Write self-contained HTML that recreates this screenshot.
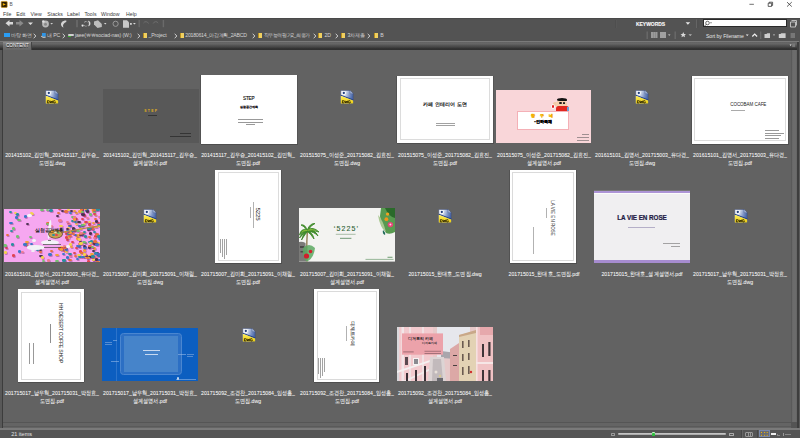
<!DOCTYPE html>
<html><head><meta charset="utf-8">
<style>
*{margin:0;padding:0;box-sizing:border-box}
html,body{width:800px;height:438px;overflow:hidden;background:#626262;font-family:"Liberation Sans",sans-serif}
.a{position:absolute}
#title{left:0;top:0;width:800px;height:18px;background:#fff}
.mn{position:absolute;top:10.7px;font-size:5.2px;color:#3a3a3a;line-height:6px}
#tb{left:0;top:18px;width:800px;height:23px;background:#535353}
.sep{position:absolute;width:1.5px;height:8px;background:#474747;border-right:0.5px solid #626262}
.bc{position:absolute;top:32.3px;font-size:5.2px;color:#d4d4d4;line-height:6px;white-space:nowrap;letter-spacing:-0.12px}
.chev{position:absolute;top:32.5px;font-size:5px;color:#bdbdbd;line-height:6px}
.fold{position:absolute;top:32.5px;width:3.6px;height:5.5px;background:#f0d060;border-left:0.8px solid #b89020}
#content{left:3px;top:50px;width:787.5px;height:372px;background:#626262}
.th{position:absolute;overflow:hidden}
.tt{position:absolute;font-family:"Liberation Sans",sans-serif;white-space:nowrap;line-height:1}
.dwg{position:absolute;width:14px;height:14px}
.lb{position:absolute;width:130px;text-align:center;font-size:6.1px;line-height:8px;color:#f6f6f6;white-space:nowrap;transform:scaleX(0.85);-webkit-text-stroke:0.1px rgba(255,255,255,.6)}
</style></head><body>
<!-- title bar -->
<div class="a" id="title"></div>
<svg class="a" style="left:0;top:0" width="9" height="9" viewBox="0 0 9 9">
 <rect x="1.2" y="1.4" width="6" height="6" rx="0.6" fill="#2c1c00" stroke="#d89a00" stroke-width="0.6"/>
 <path d="M2.8 3 L5.9 4.4 L2.8 5.8 Z" fill="#f0b000"/>
</svg>
<div class="a" style="left:9.6px;top:2.2px;font-size:4.8px;color:#555;line-height:5px">B</div>
<svg class="a" style="left:745px;top:0" width="55" height="9" viewBox="0 0 55 9">
 <path d="M4.4 4.3 H8.9" stroke="#333" stroke-width="0.7"/>
 <path d="M23.2 3.2 H26.6 V6.4 H23.2 Z M24.2 3.2 V2.2 H27.6 V5.4 H26.6" fill="none" stroke="#222" stroke-width="0.7"/>
 <path d="M42 2.1 L46.8 6.6 M46.8 2.1 L42 6.6" stroke="#222" stroke-width="0.7"/>
</svg>
<div class="mn" style="left:3px">File</div>
<div class="mn" style="left:16.3px">Edit</div>
<div class="mn" style="left:30.6px">View</div>
<div class="mn" style="left:47.3px">Stacks</div>
<div class="mn" style="left:66.9px">Label</div>
<div class="mn" style="left:84.4px">Tools</div>
<div class="mn" style="left:101px">Window</div>
<div class="mn" style="left:126px">Help</div>

<!-- toolbar -->
<div class="a" id="tb"></div>
<div class="a" style="left:0;top:18px;width:800px;height:1px;background:#4a4a4a"></div>
<svg class="a" style="left:0;top:18px" width="800" height="12" viewBox="0 0 800 12">
 <path d="M5.5 5.2 L9.5 2 V4 H13 V6.6 H9.5 V8.6 Z" fill="#d8d8d8"/>
 <path d="M23.5 5.2 L19.5 2 V4 H16 V6.6 H19.5 V8.6 Z" fill="#8a8a8a"/>
 <path d="M28 4.5 H33 L30.5 7 Z" fill="#e0e0e0"/>
 <circle cx="45.5" cy="6" r="3.4" fill="#b8b8b8"/><circle cx="45.5" cy="6.3" r="1.5" fill="#888"/><circle cx="43.3" cy="3.5" r="1.3" fill="#e0e0e0"/>
 <path d="M50.3 5 H53 L51.65 6.5 Z" fill="#d0d0d0"/>
 <path d="M66.3 2.6 C63 2.4 60.2 4.8 61.2 7.4 C61.7 8.6 62.8 9.3 63.6 9.4 C62.6 7.8 62.8 5.4 66.3 3.9 Z" fill="#d4d4d4"/>
 <rect x="76.2" y="2" width="1.6" height="7.2" fill="#6c6c6c"/>
 <circle cx="82.6" cy="7.6" r="1.3" fill="#e8e8e8" stroke="#2a2a2a" stroke-width="0.4"/><path d="M84 4.6 C85 3.2 87 3.2 87.6 4.4 M84.2 7.4 C85 8.4 86.4 8.4 87.2 7.6" fill="none" stroke="#bdbdbd" stroke-width="0.9" stroke-dasharray="0.9 0.5"/><path d="M88.4 3 C90.6 3.6 90.8 7 88.6 8 C89.4 6.4 89.4 4.6 88.4 3Z" fill="#e0e0e0" stroke="#e0e0e0" stroke-width="0.5"/>
 <path d="M94 3.5 L98 2.2 L101.8 6 V9 L97.5 10 L94 6.5 Z" fill="#bdbdbd"/>
 <path d="M104 5 H106.5 L105.25 6.4 Z" fill="#ddd"/>
 <circle cx="115.6" cy="5.8" r="2.6" fill="none" stroke="#9a9a9a" stroke-width="1"/>
 <path d="M123 2.2 H127 L129 4.2 V9.8 H123 Z" fill="#c8c8c8"/><rect x="130" y="5" width="1.8" height="1.8" fill="#cfcfcf"/>
 <path d="M133 5 H135.8 L134.4 6.5 Z" fill="#ddd"/>
 <rect x="138.5" y="2" width="1.4" height="7.2" fill="#6a6a6a"/>
 <path d="M148.5 5.5 A2.8 2.8 0 0 0 143.5 5" fill="none" stroke="#6e6e6e" stroke-width="1"/>
 <path d="M153.2 5.5 A2.8 2.8 0 0 1 158.2 5" fill="none" stroke="#6e6e6e" stroke-width="1"/>
 <rect x="162.7" y="2" width="1.4" height="7.2" fill="#6a6a6a"/>
 <rect x="615" y="2" width="1" height="8" fill="#4e4e4e"/><rect x="616" y="2" width="0.5" height="8" fill="#5c5c5c"/>
 <path d="M685.6 4.2 H690.2 L687.9 6.8 Z" fill="#e8e8e8"/>
 <rect x="696.2" y="1.5" width="1.2" height="8.5" fill="#6a6a6a"/><rect x="697.4" y="1.5" width="0.8" height="8.5" fill="#4a4a4a"/>
 <path d="M790.5 4 H795.5 V9 H790.5 Z M791.5 2.5 H796.5 V7.5" fill="none" stroke="#c8c8c8" stroke-width="0.9"/>
</svg>
<div class="a" style="left:636px;top:20.5px;font-size:5px;font-weight:bold;color:#f6f6f6;line-height:6px;letter-spacing:-0.05px;-webkit-text-stroke:0.12px #fff">KEYWORDS</div>
<div class="a" style="left:703px;top:19px;width:84px;height:8.3px;background:#fff;border:0.7px solid #2a2a2a"></div>
<svg class="a" style="left:703px;top:19px" width="12" height="9" viewBox="0 0 12 9">
 <circle cx="4.5" cy="4" r="1.8" fill="none" stroke="#333" stroke-width="0.7"/><path d="M3.2 5.3 L1.6 7" stroke="#333" stroke-width="0.8"/><path d="M7 3.4 H9 L8 4.6 Z" fill="#333"/>
</svg>

<!-- breadcrumb row -->
<div class="a" style="left:3.7px;top:33.3px;width:6.3px;height:3.5px;background:#2a9df4"></div>
<div class="bc" style="left:11px">바탕 화면</div>
<svg class="a" style="left:33.0px;top:32.5px" width="4" height="6" viewBox="0 0 4 6"><path d="M0.7 0.9 L2.9 3 L0.7 5.1" fill="none" stroke="#d8d8d8" stroke-width="1"/></svg>
<svg class="a" style="left:39.5px;top:32px" width="7" height="7" viewBox="0 0 7 7"><path d="M2 1 H5.8 V4.6 H2 Z" fill="#2f95e6"/><path d="M1.2 4.2 Q2.5 5.8 5.6 5.2" fill="none" stroke="#e8e8e8" stroke-width="0.9"/></svg>
<div class="bc" style="left:47px">내 PC</div>
<svg class="a" style="left:62.0px;top:32.5px" width="4" height="6" viewBox="0 0 4 6"><path d="M0.7 0.9 L2.9 3 L0.7 5.1" fill="none" stroke="#d8d8d8" stroke-width="1"/></svg>
<div class="a" style="left:68px;top:33.5px;width:6px;height:2.5px;background:#d0d0d0;border-radius:1px"></div>
<div class="a" style="left:68px;top:36px;width:3px;height:1.2px;background:#3bb030"></div>
<div class="bc" style="left:75px">jaee(￦￦sociad-nas) (W:)</div>
<svg class="a" style="left:137.0px;top:32.5px" width="4" height="6" viewBox="0 0 4 6"><path d="M0.7 0.9 L2.9 3 L0.7 5.1" fill="none" stroke="#d8d8d8" stroke-width="1"/></svg>
<div class="fold" style="left:143.2px"></div>
<div class="bc" style="left:148.5px">_Project</div>
<svg class="a" style="left:173.8px;top:32.5px" width="4" height="6" viewBox="0 0 4 6"><path d="M0.7 0.9 L2.9 3 L0.7 5.1" fill="none" stroke="#d8d8d8" stroke-width="1"/></svg>
<div class="fold" style="left:180px"></div>
<div class="bc" style="left:185.3px;letter-spacing:-0.25px">20180614_마감계획_2ABCD</div>
<svg class="a" style="left:251.5px;top:32.5px" width="4" height="6" viewBox="0 0 4 6"><path d="M0.7 0.9 L2.9 3 L0.7 5.1" fill="none" stroke="#d8d8d8" stroke-width="1"/></svg>
<div class="fold" style="left:258px"></div>
<div class="bc" style="left:263.5px;letter-spacing:-0.4px">직무능력평가2_최종가</div>
<svg class="a" style="left:313.0px;top:32.5px" width="4" height="6" viewBox="0 0 4 6"><path d="M0.7 0.9 L2.9 3 L0.7 5.1" fill="none" stroke="#d8d8d8" stroke-width="1"/></svg>
<div class="fold" style="left:318px"></div>
<div class="bc" style="left:324.6px">2D</div>
<svg class="a" style="left:334.7px;top:32.5px" width="4" height="6" viewBox="0 0 4 6"><path d="M0.7 0.9 L2.9 3 L0.7 5.1" fill="none" stroke="#d8d8d8" stroke-width="1"/></svg>
<div class="fold" style="left:341px"></div>
<div class="bc" style="left:347.5px">3차제출</div>
<svg class="a" style="left:366.8px;top:32.5px" width="4" height="6" viewBox="0 0 4 6"><path d="M0.7 0.9 L2.9 3 L0.7 5.1" fill="none" stroke="#d8d8d8" stroke-width="1"/></svg>
<div class="fold" style="left:374px"></div>
<div class="bc" style="left:380.3px">B</div>

<!-- right side row 2 -->
<svg class="a" style="left:640px;top:29px" width="160" height="12" viewBox="0 0 160 12">
 <rect x="6.5" y="2.5" width="1.4" height="7.5" fill="#6a6a6a"/>
 <rect x="11" y="3" width="6.5" height="6" fill="#9a9a9a"/><rect x="13" y="3" width="0.4" height="6" fill="#777"/><rect x="15.2" y="3" width="0.4" height="6" fill="#777"/>
 <rect x="20" y="3" width="6" height="6" fill="#a0a0a0"/>
 <path d="M28 5.5 H30.5 L29.25 6.8 Z" fill="#ddd"/>
 <rect x="34.5" y="2.5" width="1.4" height="7.5" fill="#6a6a6a"/>
 <path d="M43.25 3 L44.1 4.9 L46 5.1 L44.6 6.3 L45 8.3 L43.25 7.3 L41.5 8.3 L41.9 6.3 L40.5 5.1 L42.4 4.9 Z" fill="#d8d8d8"/>
 <path d="M48.5 5.5 H52 L50.25 6.8 Z" fill="#ddd"/>
 <path d="M105.8 5.4 H108.7 L107.25 6.9 Z" fill="#f0f0f0"/>
 <path d="M112.3 7.5 L114.7 5 L117.1 7.5" fill="none" stroke="#f0f0f0" stroke-width="1.2"/>
 <rect x="120" y="2.5" width="1.3" height="7.5" fill="#6a6a6a"/>
 <path d="M124.5 5 H126.5 L127.3 4.2 H130 V9 H124.5 Z" fill="#cfcfcf"/>
 <path d="M133 5.6 H135 L134 6.8 Z" fill="#ddd"/>
 <path d="M138.8 5 H140.5 L141.3 4.2 H145.6 V9 H138.8 Z" fill="#d0d0d0"/>
 <path d="M150.6 4 H155 V9 H150.6 Z" fill="#777"/>
</svg>
<div class="a" style="left:706px;top:32.6px;font-size:5.1px;color:#e6e6e6;line-height:6px;letter-spacing:-0.05px">Sort by Filename</div>

<!-- panel tab bar -->
<div class="a" style="left:0;top:40.7px;width:800px;height:1.5px;background:#7a7a7a"></div>
<div class="a" style="left:0;top:42.2px;width:800px;height:7.8px;background:linear-gradient(#626262 0,#666 14%,#666 26%,#585858 36%,#484848 60%,#333 82%,#2e2e2e 100%)"></div>
<div class="a" style="left:3px;top:42.2px;width:29px;height:7.8px;background:linear-gradient(#8c8c8c,#747474 35%,#666 100%);border-right:0.5px solid #444"></div>
<div class="a" style="left:6px;top:43.3px;font-size:4.8px;color:#f0f0f0;line-height:5px;letter-spacing:-0.1px;text-shadow:0 0.7px 0.4px #222">CONTENT</div>
<svg class="a" style="left:788px;top:42px" width="10" height="7" viewBox="0 0 10 7">
 <path d="M1.6 2.6 H3.6 L2.6 3.9 Z" fill="#f0f0f0"/>
 <path d="M4.2 2.2 H7.2 M4.2 3.4 H7.2 M4.2 4.6 H7.2" stroke="#9a9a9a" stroke-width="0.6"/>
</svg>
<!-- left edge -->
<div class="a" style="left:0;top:50px;width:1.8px;height:378px;background:#585858"></div>
<div class="a" style="left:1.8px;top:50px;width:1.2px;height:378px;background:#3c3c3c"></div>

<!-- content -->
<div class="a" id="content"></div>
<div class="a" style="left:102.50px;top:89.20px;width:96.50px;height:53.40px;background:#585858;"></div>
<div class="tt" style="left:102.50px;width:96.50px;text-align:center;top:109.90px;font-size:3.4px;color:#e2b21c;font-weight:bold;letter-spacing:0.2px">S T E P</div>
<div class="a" style="left:148.00px;top:114.80px;width:8.80px;height:1.10px;background:#1c1c1c;opacity:.6"></div>
<div class="a" style="left:179.50px;top:132.60px;width:11.50px;height:1.00px;background:#1a1a1a;opacity:.55"></div>
<div class="a" style="left:169.90px;top:135.70px;width:21.10px;height:1.00px;background:#1a1a1a;opacity:.55"></div>
<div class="a" style="left:199.90px;top:75.00px;width:0.60px;height:68.60px;background:#525252;"></div><div class="a" style="left:200.50px;top:143.60px;width:97.10px;height:1.00px;background:#4e4e4e;"></div><div class="a" style="left:297.00px;top:75.00px;width:0.60px;height:68.60px;background:#555;"></div>
<div class="a" style="left:200.50px;top:75.00px;width:96.50px;height:68.60px;background:#fff;"></div>
<div class="tt" style="left:200.50px;width:96.50px;text-align:center;top:96.60px;font-size:4.6px;color:#111;letter-spacing:-0.1px;-webkit-text-stroke:0.15px #111">STEP</div>
<div class="tt" style="left:200.50px;width:96.50px;text-align:center;top:105.60px;font-size:3.1px;color:#222;-webkit-text-stroke:0.25px #222">실험공간계획</div>
<div class="a" style="left:237.50px;top:119.30px;width:25.00px;height:1.00px;background:#333;opacity:0.5"></div><div class="a" style="left:237.50px;top:121.70px;width:25.00px;height:1.00px;background:#333;opacity:0.5"></div><div class="a" style="left:245.50px;top:124.10px;width:9.00px;height:1.00px;background:#333;opacity:0.5"></div>
<div class="a" style="left:396.40px;top:75.60px;width:0.60px;height:67.70px;background:#525252;"></div><div class="a" style="left:397.00px;top:143.30px;width:96.60px;height:1.00px;background:#4e4e4e;"></div><div class="a" style="left:493.00px;top:75.60px;width:0.60px;height:67.70px;background:#555;"></div>
<div class="a" style="left:397.00px;top:75.60px;width:96.00px;height:67.70px;background:#fff;"></div>
<div class="a" style="left:399.70px;top:78.40px;width:90.70px;height:62.10px;background:transparent;border:0.5px solid #dcdcdc"></div>
<div class="tt" style="left:397.00px;width:96.00px;text-align:center;top:103.10px;font-size:4.7px;color:#000;letter-spacing:0.1px;-webkit-text-stroke:0.18px #000">카페 인테리어 도면</div>
<div class="a" style="left:436.40px;top:122.58px;width:18.60px;height:1.00px;background:#555;opacity:0.55"></div><div class="a" style="left:436.40px;top:125.12px;width:18.60px;height:1.00px;background:#555;opacity:0.55"></div>
<div class="a" style="left:495.60px;top:89.80px;width:95.80px;height:53.60px;background:#f9d6d9;"></div>
<div class="a" style="left:517.00px;top:111.00px;width:52.00px;height:18.60px;background:#fff;border:0.5px solid #f4b0b6;box-sizing:border-box"></div>
<div class="tt" style="left:517.00px;width:52.00px;text-align:center;top:114.60px;font-size:3.6px;color:#f2ae00;font-weight:bold;letter-spacing:2.2px;-webkit-text-stroke:0.35px #f2ae00">창 구 네</div>
<div class="tt" style="left:517.00px;width:52.00px;text-align:center;top:120.20px;font-size:4.3px;color:#0c0c0c;font-weight:bold;-webkit-text-stroke:0.3px #000">•인하독채</div>
<div class="a" style="left:553.20px;top:102.00px;width:4.30px;height:4.00px;background:#f3c7a6;border-radius:50%"></div>
<div class="a" style="left:551.50px;top:105.20px;width:2.30px;height:2.40px;background:#e22020;border-radius:50%;box-shadow:0 0 0 0.7px #fff"></div>
<div class="a" style="left:556.00px;top:99.50px;width:11.00px;height:8.00px;background:#f5cfae;border-radius:45% 50% 40% 40%"></div>
<div class="a" style="left:556.50px;top:97.60px;width:10.50px;height:3.60px;background:#121212;border-radius:55% 55% 20% 30%"></div>
<div class="a" style="left:559.00px;top:102.40px;width:2.50px;height:1.40px;background:#1a1a1a;border-radius:50%"></div>
<div class="a" style="left:562.50px;top:102.40px;width:2.50px;height:1.40px;background:#1a1a1a;border-radius:50%"></div>
<div class="a" style="left:555.50px;top:106.00px;width:13.50px;height:5.00px;background:#e2261e;border-radius:2.5px 2.5px 0 0"></div>
<div class="a" style="left:567.00px;top:106.50px;width:2.00px;height:4.50px;background:#6aa0d8;"></div>
<div class="a" style="left:582.40px;top:134.30px;width:6.60px;height:1.00px;background:#555;opacity:0.55"></div><div class="a" style="left:577.00px;top:137.30px;width:12.00px;height:1.00px;background:#555;opacity:0.55"></div><div class="a" style="left:577.00px;top:140.30px;width:12.00px;height:1.00px;background:#555;opacity:0.55"></div>
<div class="a" style="left:691.20px;top:75.50px;width:0.60px;height:68.10px;background:#525252;"></div><div class="a" style="left:691.80px;top:143.60px;width:97.00px;height:1.00px;background:#4e4e4e;"></div><div class="a" style="left:788.20px;top:75.50px;width:0.60px;height:68.10px;background:#555;"></div>
<div class="a" style="left:691.80px;top:75.50px;width:96.40px;height:68.10px;background:#fff;"></div>
<div class="a" style="left:694.30px;top:78.00px;width:91.40px;height:63.10px;background:transparent;border:0.5px solid #dcdcdc"></div>
<div class="tt" style="left:730.20px;top:102.60px;font-size:4.5px;color:#1a1a1a;letter-spacing:-0.03px">COCOBAM CAFE</div>
<div class="a" style="left:731.00px;top:109.80px;width:14.00px;height:0.90px;background:#555;opacity:.5"></div>
<div class="a" style="left:765.30px;top:130.16px;width:13.23px;height:0.90px;background:#333;opacity:0.5"></div><div class="a" style="left:765.30px;top:132.79px;width:18.90px;height:0.90px;background:#333;opacity:0.5"></div><div class="a" style="left:765.30px;top:135.41px;width:16.07px;height:0.90px;background:#333;opacity:0.5"></div><div class="a" style="left:765.30px;top:138.04px;width:14.18px;height:0.90px;background:#333;opacity:0.5"></div>
<div class="a" style="left:4px;top:208.5px;width:96.0px;height:53.5px;background:#f6a7f0;overflow:hidden"><div class="a" style="left:88.8px;top:38.8px;width:3.4px;height:2.4px;border-radius:50%;background:#f2a236;box-shadow:0.8px 1px 0.6px rgba(130,50,120,.45)"></div><div class="a" style="left:79.0px;top:40.7px;width:3.4px;height:2.4px;border-radius:50%;background:#f2a236;box-shadow:0.8px 1px 0.6px rgba(130,50,120,.45)"></div><div class="a" style="left:84.8px;top:4.9px;width:3.4px;height:2.4px;border-radius:50%;background:#74c070;box-shadow:0.8px 1px 0.6px rgba(130,50,120,.45)"></div><div class="a" style="left:68.5px;top:20.8px;width:3.4px;height:2.4px;border-radius:50%;background:#e8703a;box-shadow:0.8px 1px 0.6px rgba(130,50,120,.45)"></div><div class="a" style="left:13.6px;top:41.8px;width:3.4px;height:2.4px;border-radius:50%;background:#3a78c8;box-shadow:0.8px 1px 0.6px rgba(130,50,120,.45)"></div><div class="a" style="left:84.1px;top:14.9px;width:3.4px;height:2.4px;border-radius:50%;background:#e2434f;box-shadow:0.8px 1px 0.6px rgba(130,50,120,.45)"></div><div class="a" style="left:88.1px;top:13.0px;width:3.4px;height:2.4px;border-radius:50%;background:#f2a236;box-shadow:0.8px 1px 0.6px rgba(130,50,120,.45)"></div><div class="a" style="left:55.5px;top:37.0px;width:3.4px;height:2.4px;border-radius:50%;background:#f4d44a;box-shadow:0.8px 1px 0.6px rgba(130,50,120,.45)"></div><div class="a" style="left:76.9px;top:24.8px;width:3.4px;height:2.4px;border-radius:50%;background:#3a78c8;box-shadow:0.8px 1px 0.6px rgba(130,50,120,.45)"></div><div class="a" style="left:88.4px;top:50.1px;width:3.4px;height:2.4px;border-radius:50%;background:#e8703a;box-shadow:0.8px 1px 0.6px rgba(130,50,120,.45)"></div><div class="a" style="left:53.8px;top:-0.7px;width:3.4px;height:2.4px;border-radius:50%;background:#e2434f;box-shadow:0.8px 1px 0.6px rgba(130,50,120,.45)"></div><div class="a" style="left:58.2px;top:50.3px;width:3.4px;height:2.4px;border-radius:50%;background:#74c070;box-shadow:0.8px 1px 0.6px rgba(130,50,120,.45)"></div><div class="a" style="left:87.5px;top:49.7px;width:3.4px;height:2.4px;border-radius:50%;background:#f4d44a;box-shadow:0.8px 1px 0.6px rgba(130,50,120,.45)"></div><div class="a" style="left:84.0px;top:12.3px;width:3.4px;height:2.4px;border-radius:50%;background:#f4d44a;box-shadow:0.8px 1px 0.6px rgba(130,50,120,.45)"></div><div class="a" style="left:80.8px;top:0.8px;width:3.4px;height:2.4px;border-radius:50%;background:#2a8f9f;box-shadow:0.8px 1px 0.6px rgba(130,50,120,.45)"></div><div class="a" style="left:75.0px;top:32.6px;width:3.4px;height:2.4px;border-radius:50%;background:#4a3050;box-shadow:0.8px 1px 0.6px rgba(130,50,120,.45)"></div><div class="a" style="left:94.0px;top:7.5px;width:3.4px;height:2.4px;border-radius:50%;background:#f07a90;box-shadow:0.8px 1px 0.6px rgba(130,50,120,.45)"></div><div class="a" style="left:87.0px;top:0.5px;width:3.4px;height:2.4px;border-radius:50%;background:#f4d44a;box-shadow:0.8px 1px 0.6px rgba(130,50,120,.45)"></div><div class="a" style="left:77.6px;top:23.4px;width:3.4px;height:2.4px;border-radius:50%;background:#f2a236;box-shadow:0.8px 1px 0.6px rgba(130,50,120,.45)"></div><div class="a" style="left:92.3px;top:33.3px;width:3.4px;height:2.4px;border-radius:50%;background:#f4d44a;box-shadow:0.8px 1px 0.6px rgba(130,50,120,.45)"></div><div class="a" style="left:78.8px;top:5.9px;width:3.4px;height:2.4px;border-radius:50%;background:#e2434f;box-shadow:0.8px 1px 0.6px rgba(130,50,120,.45)"></div><div class="a" style="left:58.8px;top:41.4px;width:3.4px;height:2.4px;border-radius:50%;background:#e8703a;box-shadow:0.8px 1px 0.6px rgba(130,50,120,.45)"></div><div class="a" style="left:64.4px;top:16.0px;width:3.4px;height:2.4px;border-radius:50%;background:#3a78c8;box-shadow:0.8px 1px 0.6px rgba(130,50,120,.45)"></div><div class="a" style="left:93.2px;top:50.6px;width:3.4px;height:2.4px;border-radius:50%;background:#3a78c8;box-shadow:0.8px 1px 0.6px rgba(130,50,120,.45)"></div><div class="a" style="left:81.6px;top:8.5px;width:3.4px;height:2.4px;border-radius:50%;background:#f07a90;box-shadow:0.8px 1px 0.6px rgba(130,50,120,.45)"></div><div class="a" style="left:73.4px;top:45.6px;width:3.4px;height:2.4px;border-radius:50%;background:#f4d44a;box-shadow:0.8px 1px 0.6px rgba(130,50,120,.45)"></div><div class="a" style="left:65.0px;top:34.7px;width:3.4px;height:2.4px;border-radius:50%;background:#f4d44a;box-shadow:0.8px 1px 0.6px rgba(130,50,120,.45)"></div><div class="a" style="left:90.2px;top:17.2px;width:3.4px;height:2.4px;border-radius:50%;background:#f2a236;box-shadow:0.8px 1px 0.6px rgba(130,50,120,.45)"></div><div class="a" style="left:63.0px;top:18.1px;width:3.4px;height:2.4px;border-radius:50%;background:#f4d44a;box-shadow:0.8px 1px 0.6px rgba(130,50,120,.45)"></div><div class="a" style="left:69.1px;top:43.5px;width:3.4px;height:2.4px;border-radius:50%;background:#e2434f;box-shadow:0.8px 1px 0.6px rgba(130,50,120,.45)"></div><div class="a" style="left:90.1px;top:26.8px;width:3.4px;height:2.4px;border-radius:50%;background:#e2434f;box-shadow:0.8px 1px 0.6px rgba(130,50,120,.45)"></div><div class="a" style="left:51.4px;top:45.6px;width:3.4px;height:2.4px;border-radius:50%;background:#f2a236;box-shadow:0.8px 1px 0.6px rgba(130,50,120,.45)"></div><div class="a" style="left:91.2px;top:24.9px;width:3.4px;height:2.4px;border-radius:50%;background:#e8703a;box-shadow:0.8px 1px 0.6px rgba(130,50,120,.45)"></div><div class="a" style="left:83.9px;top:19.1px;width:3.4px;height:2.4px;border-radius:50%;background:#74c070;box-shadow:0.8px 1px 0.6px rgba(130,50,120,.45)"></div><div class="a" style="left:55.3px;top:38.8px;width:3.4px;height:2.4px;border-radius:50%;background:#4a3050;box-shadow:0.8px 1px 0.6px rgba(130,50,120,.45)"></div><div class="a" style="left:88.1px;top:41.0px;width:3.4px;height:2.4px;border-radius:50%;background:#4a3050;box-shadow:0.8px 1px 0.6px rgba(130,50,120,.45)"></div><div class="a" style="left:79.3px;top:37.8px;width:3.4px;height:2.4px;border-radius:50%;background:#3a78c8;box-shadow:0.8px 1px 0.6px rgba(130,50,120,.45)"></div><div class="a" style="left:56.3px;top:38.9px;width:3.4px;height:2.4px;border-radius:50%;background:#e2434f;box-shadow:0.8px 1px 0.6px rgba(130,50,120,.45)"></div><div class="a" style="left:86.3px;top:46.7px;width:3.4px;height:2.4px;border-radius:50%;background:#f2a236;box-shadow:0.8px 1px 0.6px rgba(130,50,120,.45)"></div><div class="a" style="left:64.4px;top:50.3px;width:3.4px;height:2.4px;border-radius:50%;background:#e8703a;box-shadow:0.8px 1px 0.6px rgba(130,50,120,.45)"></div><div class="a" style="left:84.6px;top:23.9px;width:3.4px;height:2.4px;border-radius:50%;background:#4a3050;box-shadow:0.8px 1px 0.6px rgba(130,50,120,.45)"></div><div class="a" style="left:78.6px;top:36.3px;width:3.4px;height:2.4px;border-radius:50%;background:#4a3050;box-shadow:0.8px 1px 0.6px rgba(130,50,120,.45)"></div><div class="a" style="left:60.5px;top:24.3px;width:3.4px;height:2.4px;border-radius:50%;background:#e2434f;box-shadow:0.8px 1px 0.6px rgba(130,50,120,.45)"></div><div class="a" style="left:76.2px;top:2.5px;width:3.4px;height:2.4px;border-radius:50%;background:#2a8f9f;box-shadow:0.8px 1px 0.6px rgba(130,50,120,.45)"></div><div class="a" style="left:74.3px;top:34.6px;width:3.4px;height:2.4px;border-radius:50%;background:#e8703a;box-shadow:0.8px 1px 0.6px rgba(130,50,120,.45)"></div><div class="a" style="left:92.3px;top:52.7px;width:3.4px;height:2.4px;border-radius:50%;background:#f2a236;box-shadow:0.8px 1px 0.6px rgba(130,50,120,.45)"></div><div class="a" style="left:77.4px;top:4.8px;width:3.4px;height:2.4px;border-radius:50%;background:#4a3050;box-shadow:0.8px 1px 0.6px rgba(130,50,120,.45)"></div><div class="a" style="left:66.1px;top:22.5px;width:3.4px;height:2.4px;border-radius:50%;background:#e2434f;box-shadow:0.8px 1px 0.6px rgba(130,50,120,.45)"></div><div class="a" style="left:69.6px;top:46.2px;width:3.4px;height:2.4px;border-radius:50%;background:#e8703a;box-shadow:0.8px 1px 0.6px rgba(130,50,120,.45)"></div><div class="a" style="left:63.4px;top:14.5px;width:3.4px;height:2.4px;border-radius:50%;background:#f07a90;box-shadow:0.8px 1px 0.6px rgba(130,50,120,.45)"></div><div class="a" style="left:69.0px;top:8.5px;width:3.4px;height:2.4px;border-radius:50%;background:#f4d44a;box-shadow:0.8px 1px 0.6px rgba(130,50,120,.45)"></div><div class="a" style="left:6.5px;top:34.9px;width:3.4px;height:2.4px;border-radius:50%;background:#2a8f9f;box-shadow:0.8px 1px 0.6px rgba(130,50,120,.45)"></div><div class="a" style="left:42.7px;top:50.8px;width:3.4px;height:2.4px;border-radius:50%;background:#f07a90;box-shadow:0.8px 1px 0.6px rgba(130,50,120,.45)"></div><div class="a" style="left:1.1px;top:38.0px;width:3.4px;height:2.4px;border-radius:50%;background:#e2434f;box-shadow:0.8px 1px 0.6px rgba(130,50,120,.45)"></div><div class="a" style="left:89.0px;top:22.0px;width:3.4px;height:2.4px;border-radius:50%;background:#2a8f9f;box-shadow:0.8px 1px 0.6px rgba(130,50,120,.45)"></div><div class="a" style="left:78.5px;top:14.4px;width:3.4px;height:2.4px;border-radius:50%;background:#f4d44a;box-shadow:0.8px 1px 0.6px rgba(130,50,120,.45)"></div><div class="a" style="left:74.7px;top:19.2px;width:3.4px;height:2.4px;border-radius:50%;background:#f4d44a;box-shadow:0.8px 1px 0.6px rgba(130,50,120,.45)"></div><div class="a" style="left:60.5px;top:42.2px;width:3.4px;height:2.4px;border-radius:50%;background:#f4d44a;box-shadow:0.8px 1px 0.6px rgba(130,50,120,.45)"></div><div class="a" style="left:69.4px;top:20.2px;width:3.4px;height:2.4px;border-radius:50%;background:#f2a236;box-shadow:0.8px 1px 0.6px rgba(130,50,120,.45)"></div><div class="a" style="left:88.3px;top:34.5px;width:3.4px;height:2.4px;border-radius:50%;background:#e8703a;box-shadow:0.8px 1px 0.6px rgba(130,50,120,.45)"></div><div class="a" style="left:35.3px;top:46.3px;width:3.4px;height:2.4px;border-radius:50%;background:#4a3050;box-shadow:0.8px 1px 0.6px rgba(130,50,120,.45)"></div><div class="a" style="left:62.8px;top:0.6px;width:3.4px;height:2.4px;border-radius:50%;background:#f4d44a;box-shadow:0.8px 1px 0.6px rgba(130,50,120,.45)"></div><div class="a" style="left:87.1px;top:18.7px;width:3.4px;height:2.4px;border-radius:50%;background:#f2a236;box-shadow:0.8px 1px 0.6px rgba(130,50,120,.45)"></div><div class="a" style="left:63.0px;top:24.3px;width:3.4px;height:2.4px;border-radius:50%;background:#2a8f9f;box-shadow:0.8px 1px 0.6px rgba(130,50,120,.45)"></div><div class="a" style="left:73.7px;top:16.3px;width:3.4px;height:2.4px;border-radius:50%;background:#74c070;box-shadow:0.8px 1px 0.6px rgba(130,50,120,.45)"></div><div class="a" style="left:68.3px;top:7.6px;width:3.4px;height:2.4px;border-radius:50%;background:#f2a236;box-shadow:0.8px 1px 0.6px rgba(130,50,120,.45)"></div><div class="a" style="left:85.8px;top:37.0px;width:3.4px;height:2.4px;border-radius:50%;background:#e2434f;box-shadow:0.8px 1px 0.6px rgba(130,50,120,.45)"></div><div class="a" style="left:67.2px;top:7.6px;width:3.4px;height:2.4px;border-radius:50%;background:#74c070;box-shadow:0.8px 1px 0.6px rgba(130,50,120,.45)"></div><div class="a" style="left:88.6px;top:33.7px;width:3.4px;height:2.4px;border-radius:50%;background:#4a3050;box-shadow:0.8px 1px 0.6px rgba(130,50,120,.45)"></div><div class="a" style="left:93.3px;top:26.8px;width:3.4px;height:2.4px;border-radius:50%;background:#2a8f9f;box-shadow:0.8px 1px 0.6px rgba(130,50,120,.45)"></div><div class="a" style="left:67.1px;top:11.6px;width:3.4px;height:2.4px;border-radius:50%;background:#2a8f9f;box-shadow:0.8px 1px 0.6px rgba(130,50,120,.45)"></div><div class="a" style="left:88.1px;top:1.7px;width:3.4px;height:2.4px;border-radius:50%;background:#f2a236;box-shadow:0.8px 1px 0.6px rgba(130,50,120,.45)"></div><div class="a" style="left:46.1px;top:41.0px;width:3.4px;height:2.4px;border-radius:50%;background:#e8703a;box-shadow:0.8px 1px 0.6px rgba(130,50,120,.45)"></div><div class="a" style="left:89.5px;top:9.3px;width:3.4px;height:2.4px;border-radius:50%;background:#e8703a;box-shadow:0.8px 1px 0.6px rgba(130,50,120,.45)"></div><div class="a" style="left:51.5px;top:6.3px;width:3.4px;height:2.4px;border-radius:50%;background:#4a3050;box-shadow:0.8px 1px 0.6px rgba(130,50,120,.45)"></div><div class="a" style="left:77.0px;top:15.7px;width:3.4px;height:2.4px;border-radius:50%;background:#2a8f9f;box-shadow:0.8px 1px 0.6px rgba(130,50,120,.45)"></div><div class="a" style="left:91.2px;top:34.8px;width:3.4px;height:2.4px;border-radius:50%;background:#3a78c8;box-shadow:0.8px 1px 0.6px rgba(130,50,120,.45)"></div><div class="a" style="left:65.6px;top:1.4px;width:3.4px;height:2.4px;border-radius:50%;background:#4a3050;box-shadow:0.8px 1px 0.6px rgba(130,50,120,.45)"></div><div class="a" style="left:83.0px;top:46.6px;width:3.4px;height:2.4px;border-radius:50%;background:#f4d44a;box-shadow:0.8px 1px 0.6px rgba(130,50,120,.45)"></div><div class="a" style="left:34.8px;top:40.3px;width:3.4px;height:2.4px;border-radius:50%;background:#4a3050;box-shadow:0.8px 1px 0.6px rgba(130,50,120,.45)"></div><div class="a" style="left:61.1px;top:39.8px;width:3.4px;height:2.4px;border-radius:50%;background:#3a78c8;box-shadow:0.8px 1px 0.6px rgba(130,50,120,.45)"></div><div class="a" style="left:46.1px;top:16.3px;width:3.4px;height:2.4px;border-radius:50%;background:#f07a90;box-shadow:0.8px 1px 0.6px rgba(130,50,120,.45)"></div><div class="a" style="left:71.6px;top:28.9px;width:3.4px;height:2.4px;border-radius:50%;background:#f2a236;box-shadow:0.8px 1px 0.6px rgba(130,50,120,.45)"></div><div class="a" style="left:91.4px;top:43.4px;width:3.4px;height:2.4px;border-radius:50%;background:#4a3050;box-shadow:0.8px 1px 0.6px rgba(130,50,120,.45)"></div><div class="a" style="left:89.4px;top:31.8px;width:3.4px;height:2.4px;border-radius:50%;background:#e8703a;box-shadow:0.8px 1px 0.6px rgba(130,50,120,.45)"></div><div class="a" style="left:92.7px;top:13.3px;width:3.4px;height:2.4px;border-radius:50%;background:#e2434f;box-shadow:0.8px 1px 0.6px rgba(130,50,120,.45)"></div><div class="a" style="left:72.0px;top:49.4px;width:3.4px;height:2.4px;border-radius:50%;background:#3a78c8;box-shadow:0.8px 1px 0.6px rgba(130,50,120,.45)"></div><div class="a" style="left:83.0px;top:20.0px;width:3.4px;height:2.4px;border-radius:50%;background:#4a3050;box-shadow:0.8px 1px 0.6px rgba(130,50,120,.45)"></div><div class="a" style="left:77.2px;top:15.2px;width:3.4px;height:2.4px;border-radius:50%;background:#74c070;box-shadow:0.8px 1px 0.6px rgba(130,50,120,.45)"></div><div class="a" style="left:62.0px;top:47.9px;width:3.4px;height:2.4px;border-radius:50%;background:#3a78c8;box-shadow:0.8px 1px 0.6px rgba(130,50,120,.45)"></div><div class="a" style="left:45.4px;top:0.8px;width:3.4px;height:2.4px;border-radius:50%;background:#2a8f9f;box-shadow:0.8px 1px 0.6px rgba(130,50,120,.45)"></div><div class="a" style="left:70.6px;top:14.0px;width:3.4px;height:2.4px;border-radius:50%;background:#f4d44a;box-shadow:0.8px 1px 0.6px rgba(130,50,120,.45)"></div><div class="a" style="left:76.4px;top:-0.0px;width:3.4px;height:2.4px;border-radius:50%;background:#4a3050;box-shadow:0.8px 1px 0.6px rgba(130,50,120,.45)"></div><div class="a" style="left:64.6px;top:23.1px;width:3.4px;height:2.4px;border-radius:50%;background:#f07a90;box-shadow:0.8px 1px 0.6px rgba(130,50,120,.45)"></div><div class="a" style="left:62.6px;top:27.8px;width:3.4px;height:2.4px;border-radius:50%;background:#f4d44a;box-shadow:0.8px 1px 0.6px rgba(130,50,120,.45)"></div><div class="a" style="left:90.3px;top:-0.1px;width:3.4px;height:2.4px;border-radius:50%;background:#74c070;box-shadow:0.8px 1px 0.6px rgba(130,50,120,.45)"></div><div class="a" style="left:25.6px;top:3.0px;width:3.4px;height:2.4px;border-radius:50%;background:#f4d44a;box-shadow:0.8px 1px 0.6px rgba(130,50,120,.45)"></div><div class="a" style="left:38.0px;top:51.1px;width:3.4px;height:2.4px;border-radius:50%;background:#74c070;box-shadow:0.8px 1px 0.6px rgba(130,50,120,.45)"></div><div class="a" style="left:90.2px;top:47.2px;width:3.4px;height:2.4px;border-radius:50%;background:#f07a90;box-shadow:0.8px 1px 0.6px rgba(130,50,120,.45)"></div><div class="a" style="left:85.7px;top:31.9px;width:3.4px;height:2.4px;border-radius:50%;background:#2a8f9f;box-shadow:0.8px 1px 0.6px rgba(130,50,120,.45)"></div><div class="a" style="left:79.2px;top:46.8px;width:3.4px;height:2.4px;border-radius:50%;background:#f4d44a;box-shadow:0.8px 1px 0.6px rgba(130,50,120,.45)"></div><div class="a" style="left:74.9px;top:41.8px;width:3.4px;height:2.4px;border-radius:50%;background:#e2434f;box-shadow:0.8px 1px 0.6px rgba(130,50,120,.45)"></div><div class="a" style="left:5.7px;top:21.1px;width:3.4px;height:2.4px;border-radius:50%;background:#2a8f9f;box-shadow:0.8px 1px 0.6px rgba(130,50,120,.45)"></div><div class="a" style="left:73.8px;top:16.6px;width:3.4px;height:2.4px;border-radius:50%;background:#3a78c8;box-shadow:0.8px 1px 0.6px rgba(130,50,120,.45)"></div><div class="a" style="left:11.5px;top:26.8px;width:3.4px;height:2.4px;border-radius:50%;background:#74c070;box-shadow:0.8px 1px 0.6px rgba(130,50,120,.45)"></div><div class="a" style="left:79.9px;top:33.6px;width:3.4px;height:2.4px;border-radius:50%;background:#74c070;box-shadow:0.8px 1px 0.6px rgba(130,50,120,.45)"></div><div class="a" style="left:84.1px;top:32.0px;width:3.4px;height:2.4px;border-radius:50%;background:#2a8f9f;box-shadow:0.8px 1px 0.6px rgba(130,50,120,.45)"></div><div class="a" style="left:-1.5px;top:35.1px;width:3.4px;height:2.4px;border-radius:50%;background:#f4d44a;box-shadow:0.8px 1px 0.6px rgba(130,50,120,.45)"></div><div class="a" style="left:71.1px;top:38.6px;width:3.4px;height:2.4px;border-radius:50%;background:#e2434f;box-shadow:0.8px 1px 0.6px rgba(130,50,120,.45)"></div><div class="a" style="left:58.3px;top:50.9px;width:3.4px;height:2.4px;border-radius:50%;background:#2a8f9f;box-shadow:0.8px 1px 0.6px rgba(130,50,120,.45)"></div><div class="a" style="left:76.5px;top:9.4px;width:3.4px;height:2.4px;border-radius:50%;background:#e2434f;box-shadow:0.8px 1px 0.6px rgba(130,50,120,.45)"></div><div class="a" style="left:90.7px;top:49.8px;width:3.4px;height:2.4px;border-radius:50%;background:#4a3050;box-shadow:0.8px 1px 0.6px rgba(130,50,120,.45)"></div><div class="a" style="left:70.4px;top:9.4px;width:3.4px;height:2.4px;border-radius:50%;background:#e2434f;box-shadow:0.8px 1px 0.6px rgba(130,50,120,.45)"></div><div class="a" style="left:74.0px;top:29.9px;width:3.4px;height:2.4px;border-radius:50%;background:#f4d44a;box-shadow:0.8px 1px 0.6px rgba(130,50,120,.45)"></div><div class="a" style="left:88.8px;top:2.2px;width:3.4px;height:2.4px;border-radius:50%;background:#74c070;box-shadow:0.8px 1px 0.6px rgba(130,50,120,.45)"></div><div class="a" style="left:5.3px;top:13.4px;width:3.4px;height:2.4px;border-radius:50%;background:#3a78c8;box-shadow:0.8px 1px 0.6px rgba(130,50,120,.45)"></div><div class="a" style="left:80.4px;top:12.0px;width:3.4px;height:2.4px;border-radius:50%;background:#e2434f;box-shadow:0.8px 1px 0.6px rgba(130,50,120,.45)"></div><div class="a" style="left:76.1px;top:-0.9px;width:3.4px;height:2.4px;border-radius:50%;background:#f4d44a;box-shadow:0.8px 1px 0.6px rgba(130,50,120,.45)"></div><div class="a" style="left:76.1px;top:-0.1px;width:3.4px;height:2.4px;border-radius:50%;background:#e8703a;box-shadow:0.8px 1px 0.6px rgba(130,50,120,.45)"></div><div class="a" style="left:16.9px;top:42.2px;width:3.4px;height:2.4px;border-radius:50%;background:#f07a90;box-shadow:0.8px 1px 0.6px rgba(130,50,120,.45)"></div><div class="a" style="left:64.3px;top:26.2px;width:3.4px;height:2.4px;border-radius:50%;background:#e8703a;box-shadow:0.8px 1px 0.6px rgba(130,50,120,.45)"></div><div class="a" style="left:72.3px;top:25.8px;width:3.4px;height:2.4px;border-radius:50%;background:#f2a236;box-shadow:0.8px 1px 0.6px rgba(130,50,120,.45)"></div><div class="a" style="left:76.3px;top:43.3px;width:3.4px;height:2.4px;border-radius:50%;background:#e8703a;box-shadow:0.8px 1px 0.6px rgba(130,50,120,.45)"></div><div class="a" style="left:-0.3px;top:42.8px;width:3.4px;height:2.4px;border-radius:50%;background:#f4d44a;box-shadow:0.8px 1px 0.6px rgba(130,50,120,.45)"></div><div class="a" style="left:91.6px;top:52.5px;width:3.4px;height:2.4px;border-radius:50%;background:#e8703a;box-shadow:0.8px 1px 0.6px rgba(130,50,120,.45)"></div><div class="a" style="left:71.1px;top:3.0px;width:3.4px;height:2.4px;border-radius:50%;background:#f2a236;box-shadow:0.8px 1px 0.6px rgba(130,50,120,.45)"></div><div class="a" style="left:84.5px;top:46.6px;width:3.4px;height:2.4px;border-radius:50%;background:#f2a236;box-shadow:0.8px 1px 0.6px rgba(130,50,120,.45)"></div><div class="a" style="left:70.0px;top:25.5px;width:3.4px;height:2.4px;border-radius:50%;background:#3a78c8;box-shadow:0.8px 1px 0.6px rgba(130,50,120,.45)"></div><div class="a" style="left:88.3px;top:0.5px;width:3.4px;height:2.4px;border-radius:50%;background:#e8703a;box-shadow:0.8px 1px 0.6px rgba(130,50,120,.45)"></div><div class="a" style="left:84.3px;top:47.0px;width:3.4px;height:2.4px;border-radius:50%;background:#4a3050;box-shadow:0.8px 1px 0.6px rgba(130,50,120,.45)"></div><div class="a" style="left:91.0px;top:11.8px;width:3.4px;height:2.4px;border-radius:50%;background:#4a3050;box-shadow:0.8px 1px 0.6px rgba(130,50,120,.45)"></div><div class="a" style="left:21.1px;top:34.7px;width:3.4px;height:2.4px;border-radius:50%;background:#f2a236;box-shadow:0.8px 1px 0.6px rgba(130,50,120,.45)"></div><div class="a" style="left:72.3px;top:21.4px;width:3.4px;height:2.4px;border-radius:50%;background:#74c070;box-shadow:0.8px 1px 0.6px rgba(130,50,120,.45)"></div><div class="a" style="left:74.4px;top:1.8px;width:3.4px;height:2.4px;border-radius:50%;background:#f2a236;box-shadow:0.8px 1px 0.6px rgba(130,50,120,.45)"></div><div class="a" style="left:64.8px;top:46.5px;width:3.4px;height:2.4px;border-radius:50%;background:#f07a90;box-shadow:0.8px 1px 0.6px rgba(130,50,120,.45)"></div><div class="a" style="left:87.1px;top:18.8px;width:3.4px;height:2.4px;border-radius:50%;background:#e8703a;box-shadow:0.8px 1px 0.6px rgba(130,50,120,.45)"></div><div class="a" style="left:93.2px;top:15.1px;width:3.4px;height:2.4px;border-radius:50%;background:#2a8f9f;box-shadow:0.8px 1px 0.6px rgba(130,50,120,.45)"></div><div class="a" style="left:60.2px;top:1.8px;width:3.4px;height:2.4px;border-radius:50%;background:#e8703a;box-shadow:0.8px 1px 0.6px rgba(130,50,120,.45)"></div><div class="a" style="left:74.1px;top:36.7px;width:3.4px;height:2.4px;border-radius:50%;background:#3a78c8;box-shadow:0.8px 1px 0.6px rgba(130,50,120,.45)"></div><div class="a" style="left:86.2px;top:44.0px;width:3.4px;height:2.4px;border-radius:50%;background:#f2a236;box-shadow:0.8px 1px 0.6px rgba(130,50,120,.45)"></div><div class="a" style="left:84.9px;top:18.0px;width:3.4px;height:2.4px;border-radius:50%;background:#3a78c8;box-shadow:0.8px 1px 0.6px rgba(130,50,120,.45)"></div><div class="a" style="left:81.9px;top:0.9px;width:3.4px;height:2.4px;border-radius:50%;background:#2a8f9f;box-shadow:0.8px 1px 0.6px rgba(130,50,120,.45)"></div><div class="a" style="left:66.1px;top:37.6px;width:3.4px;height:2.4px;border-radius:50%;background:#f2a236;box-shadow:0.8px 1px 0.6px rgba(130,50,120,.45)"></div><div class="a" style="left:83.9px;top:37.7px;width:3.4px;height:2.4px;border-radius:50%;background:#4a3050;box-shadow:0.8px 1px 0.6px rgba(130,50,120,.45)"></div><div class="a" style="left:13.2px;top:10.5px;width:3.4px;height:2.4px;border-radius:50%;background:#74c070;box-shadow:0.8px 1px 0.6px rgba(130,50,120,.45)"></div><div class="a" style="left:59.7px;top:22.4px;width:3.4px;height:2.4px;border-radius:50%;background:#e8703a;box-shadow:0.8px 1px 0.6px rgba(130,50,120,.45)"></div><div class="a" style="left:64.3px;top:22.9px;width:3.4px;height:2.4px;border-radius:50%;background:#f2a236;box-shadow:0.8px 1px 0.6px rgba(130,50,120,.45)"></div><div class="a" style="left:61.9px;top:21.5px;width:3.4px;height:2.4px;border-radius:50%;background:#f4d44a;box-shadow:0.8px 1px 0.6px rgba(130,50,120,.45)"></div><div class="a" style="left:26.5px;top:4.6px;width:3.4px;height:2.4px;border-radius:50%;background:#f4d44a;box-shadow:0.8px 1px 0.6px rgba(130,50,120,.45)"></div><div class="a" style="left:79.5px;top:26.7px;width:3.4px;height:2.4px;border-radius:50%;background:#2a8f9f;box-shadow:0.8px 1px 0.6px rgba(130,50,120,.45)"></div><div class="a" style="left:90.1px;top:5.1px;width:3.4px;height:2.4px;border-radius:50%;background:#f4d44a;box-shadow:0.8px 1px 0.6px rgba(130,50,120,.45)"></div><div class="a" style="left:7.5px;top:45.8px;width:3.4px;height:2.4px;border-radius:50%;background:#e2434f;box-shadow:0.8px 1px 0.6px rgba(130,50,120,.45)"></div><div class="a" style="left:59.4px;top:37.9px;width:3.4px;height:2.4px;border-radius:50%;background:#e8703a;box-shadow:0.8px 1px 0.6px rgba(130,50,120,.45)"></div><div class="a" style="left:80.6px;top:46.5px;width:3.4px;height:2.4px;border-radius:50%;background:#4a3050;box-shadow:0.8px 1px 0.6px rgba(130,50,120,.45)"></div><div class="a" style="left:67.1px;top:21.0px;width:3.4px;height:2.4px;border-radius:50%;background:#2a8f9f;box-shadow:0.8px 1px 0.6px rgba(130,50,120,.45)"></div><div class="a" style="left:4.7px;top:2.5px;width:3.4px;height:2.4px;border-radius:50%;background:#2a8f9f;box-shadow:0.8px 1px 0.6px rgba(130,50,120,.45)"></div><div class="a" style="left:74.2px;top:47.2px;width:3.4px;height:2.4px;border-radius:50%;background:#2a8f9f;box-shadow:0.8px 1px 0.6px rgba(130,50,120,.45)"></div><div class="a" style="left:88.5px;top:28.0px;width:3.4px;height:2.4px;border-radius:50%;background:#f07a90;box-shadow:0.8px 1px 0.6px rgba(130,50,120,.45)"></div><div class="a" style="left:62.0px;top:19.4px;width:3.4px;height:2.4px;border-radius:50%;background:#4a3050;box-shadow:0.8px 1px 0.6px rgba(130,50,120,.45)"></div><div class="a" style="left:51.2px;top:51.3px;width:3.4px;height:2.4px;border-radius:50%;background:#74c070;box-shadow:0.8px 1px 0.6px rgba(130,50,120,.45)"></div><div class="a" style="left:83.0px;top:51.8px;width:3.4px;height:2.4px;border-radius:50%;background:#e2434f;box-shadow:0.8px 1px 0.6px rgba(130,50,120,.45)"></div><div class="a" style="left:86.5px;top:16.4px;width:3.4px;height:2.4px;border-radius:50%;background:#f07a90;box-shadow:0.8px 1px 0.6px rgba(130,50,120,.45)"></div><div class="a" style="left:74.9px;top:33.1px;width:3.4px;height:2.4px;border-radius:50%;background:#e2434f;box-shadow:0.8px 1px 0.6px rgba(130,50,120,.45)"></div><div class="a" style="left:69.7px;top:12.6px;width:3.4px;height:2.4px;border-radius:50%;background:#2a8f9f;box-shadow:0.8px 1px 0.6px rgba(130,50,120,.45)"></div><div class="a" style="left:11.1px;top:7.9px;width:3.4px;height:2.4px;border-radius:50%;background:#3a78c8;box-shadow:0.8px 1px 0.6px rgba(130,50,120,.45)"></div><div class="a" style="left:75.3px;top:24.8px;width:3.4px;height:2.4px;border-radius:50%;background:#4a3050;box-shadow:0.8px 1px 0.6px rgba(130,50,120,.45)"></div><div class="a" style="left:58.6px;top:36.5px;width:3.4px;height:2.4px;border-radius:50%;background:#f07a90;box-shadow:0.8px 1px 0.6px rgba(130,50,120,.45)"></div><div class="a" style="left:82.2px;top:48.5px;width:3.4px;height:2.4px;border-radius:50%;background:#f4d44a;box-shadow:0.8px 1px 0.6px rgba(130,50,120,.45)"></div><div class="a" style="left:1.5px;top:25.1px;width:3.4px;height:2.4px;border-radius:50%;background:#e8703a;box-shadow:0.8px 1px 0.6px rgba(130,50,120,.45)"></div><div class="a" style="left:61.8px;top:21.5px;width:3.4px;height:2.4px;border-radius:50%;background:#3a78c8;box-shadow:0.8px 1px 0.6px rgba(130,50,120,.45)"></div><div class="a" style="left:66.6px;top:32.0px;width:3.4px;height:2.4px;border-radius:50%;background:#e2434f;box-shadow:0.8px 1px 0.6px rgba(130,50,120,.45)"></div><div class="a" style="left:69.0px;top:7.9px;width:3.4px;height:2.4px;border-radius:50%;background:#f07a90;box-shadow:0.8px 1px 0.6px rgba(130,50,120,.45)"></div><div class="a" style="left:54.1px;top:38.9px;width:3.4px;height:2.4px;border-radius:50%;background:#e8703a;box-shadow:0.8px 1px 0.6px rgba(130,50,120,.45)"></div><div class="a" style="left:54.2px;top:10.8px;width:3.4px;height:2.4px;border-radius:50%;background:#f07a90;box-shadow:0.8px 1px 0.6px rgba(130,50,120,.45)"></div><div class="a" style="left:55.6px;top:39.7px;width:3.4px;height:2.4px;border-radius:50%;background:#f2a236;box-shadow:0.8px 1px 0.6px rgba(130,50,120,.45)"></div><div class="a" style="left:83.9px;top:27.5px;width:3.4px;height:2.4px;border-radius:50%;background:#e8703a;box-shadow:0.8px 1px 0.6px rgba(130,50,120,.45)"></div><div class="a" style="left:75.4px;top:24.5px;width:3.4px;height:2.4px;border-radius:50%;background:#f2a236;box-shadow:0.8px 1px 0.6px rgba(130,50,120,.45)"></div><div class="a" style="left:72.1px;top:36.6px;width:3.4px;height:2.4px;border-radius:50%;background:#3a78c8;box-shadow:0.8px 1px 0.6px rgba(130,50,120,.45)"></div><div class="a" style="left:78.4px;top:32.0px;width:3.4px;height:2.4px;border-radius:50%;background:#74c070;box-shadow:0.8px 1px 0.6px rgba(130,50,120,.45)"></div><div class="a" style="left:7.9px;top:18.7px;width:3.4px;height:2.4px;border-radius:50%;background:#74c070;box-shadow:0.8px 1px 0.6px rgba(130,50,120,.45)"></div><div class="a" style="left:36.3px;top:0.6px;width:3.4px;height:2.4px;border-radius:50%;background:#74c070;box-shadow:0.8px 1px 0.6px rgba(130,50,120,.45)"></div><div class="a" style="left:68.3px;top:19.8px;width:3.4px;height:2.4px;border-radius:50%;background:#2a8f9f;box-shadow:0.8px 1px 0.6px rgba(130,50,120,.45)"></div><div class="a" style="left:84.2px;top:36.0px;width:3.4px;height:2.4px;border-radius:50%;background:#e8703a;box-shadow:0.8px 1px 0.6px rgba(130,50,120,.45)"></div><div class="a" style="left:64.3px;top:44.1px;width:3.4px;height:2.4px;border-radius:50%;background:#2a8f9f;box-shadow:0.8px 1px 0.6px rgba(130,50,120,.45)"></div><div class="a" style="left:81.9px;top:48.3px;width:3.4px;height:2.4px;border-radius:50%;background:#e8703a;box-shadow:0.8px 1px 0.6px rgba(130,50,120,.45)"></div><div class="a" style="left:77.4px;top:47.4px;width:3.4px;height:2.4px;border-radius:50%;background:#3a78c8;box-shadow:0.8px 1px 0.6px rgba(130,50,120,.45)"></div><div class="a" style="left:68.6px;top:9.7px;width:3.4px;height:2.4px;border-radius:50%;background:#f2a236;box-shadow:0.8px 1px 0.6px rgba(130,50,120,.45)"></div><div class="a" style="left:90.2px;top:43.8px;width:3.4px;height:2.4px;border-radius:50%;background:#2a8f9f;box-shadow:0.8px 1px 0.6px rgba(130,50,120,.45)"></div><div class="a" style="left:67.7px;top:18.8px;width:3.4px;height:2.4px;border-radius:50%;background:#4a3050;box-shadow:0.8px 1px 0.6px rgba(130,50,120,.45)"></div><div class="a" style="left:75.4px;top:23.2px;width:3.4px;height:2.4px;border-radius:50%;background:#f07a90;box-shadow:0.8px 1px 0.6px rgba(130,50,120,.45)"></div><div class="a" style="left:92.2px;top:-0.3px;width:3.4px;height:2.4px;border-radius:50%;background:#2a8f9f;box-shadow:0.8px 1px 0.6px rgba(130,50,120,.45)"></div><div class="a" style="left:76.7px;top:2.6px;width:3.4px;height:2.4px;border-radius:50%;background:#74c070;box-shadow:0.8px 1px 0.6px rgba(130,50,120,.45)"></div><div class="a" style="left:31.9px;top:40.3px;width:3.4px;height:2.4px;border-radius:50%;background:#2a8f9f;box-shadow:0.8px 1px 0.6px rgba(130,50,120,.45)"></div><div class="a" style="left:87.3px;top:46.9px;width:3.4px;height:2.4px;border-radius:50%;background:#2a8f9f;box-shadow:0.8px 1px 0.6px rgba(130,50,120,.45)"></div><div class="a" style="left:21.7px;top:14.5px;width:3.4px;height:2.4px;border-radius:50%;background:#4a3050;box-shadow:0.8px 1px 0.6px rgba(130,50,120,.45)"></div><div class="a" style="left:93.2px;top:45.8px;width:3.4px;height:2.4px;border-radius:50%;background:#2a8f9f;box-shadow:0.8px 1px 0.6px rgba(130,50,120,.45)"></div><div class="a" style="left:82.0px;top:1.9px;width:3.4px;height:2.4px;border-radius:50%;background:#4a3050;box-shadow:0.8px 1px 0.6px rgba(130,50,120,.45)"></div><div class="a" style="left:88.5px;top:4.6px;width:3.4px;height:2.4px;border-radius:50%;background:#e2434f;box-shadow:0.8px 1px 0.6px rgba(130,50,120,.45)"></div><div class="a" style="left:68.8px;top:1.0px;width:3.4px;height:2.4px;border-radius:50%;background:#f2a236;box-shadow:0.8px 1px 0.6px rgba(130,50,120,.45)"></div><div class="a" style="left:25.6px;top:34.3px;width:3.4px;height:2.4px;border-radius:50%;background:#3a78c8;box-shadow:0.8px 1px 0.6px rgba(130,50,120,.45)"></div><div class="a" style="left:94.0px;top:29.3px;width:3.4px;height:2.4px;border-radius:50%;background:#3a78c8;box-shadow:0.8px 1px 0.6px rgba(130,50,120,.45)"></div><div class="a" style="left:57.8px;top:44.6px;width:3.4px;height:2.4px;border-radius:50%;background:#3a78c8;box-shadow:0.8px 1px 0.6px rgba(130,50,120,.45)"></div><div class="a" style="left:94.0px;top:44.7px;width:3.4px;height:2.4px;border-radius:50%;background:#3a78c8;box-shadow:0.8px 1px 0.6px rgba(130,50,120,.45)"></div><div class="a" style="left:83.3px;top:18.8px;width:3.4px;height:2.4px;border-radius:50%;background:#2a8f9f;box-shadow:0.8px 1px 0.6px rgba(130,50,120,.45)"></div><div class="a" style="left:42.2px;top:13.8px;width:3.4px;height:2.4px;border-radius:50%;background:#e8703a;box-shadow:0.8px 1px 0.6px rgba(130,50,120,.45)"></div><div class="a" style="left:-0.8px;top:35.7px;width:3.4px;height:2.4px;border-radius:50%;background:#74c070;box-shadow:0.8px 1px 0.6px rgba(130,50,120,.45)"></div><div class="a" style="left:41.9px;top:14.3px;width:3.4px;height:2.4px;border-radius:50%;background:#74c070;box-shadow:0.8px 1px 0.6px rgba(130,50,120,.45)"></div><div class="a" style="left:61.6px;top:12.0px;width:3.4px;height:2.4px;border-radius:50%;background:#f07a90;box-shadow:0.8px 1px 0.6px rgba(130,50,120,.45)"></div><div class="a" style="left:79.6px;top:-0.5px;width:3.4px;height:2.4px;border-radius:50%;background:#f2a236;box-shadow:0.8px 1px 0.6px rgba(130,50,120,.45)"></div><div class="a" style="left:24.5px;top:27.2px;width:3.4px;height:2.4px;border-radius:50%;background:#74c070;box-shadow:0.8px 1px 0.6px rgba(130,50,120,.45)"></div><div class="a" style="left:93.6px;top:16.6px;width:3.4px;height:2.4px;border-radius:50%;background:#f4d44a;box-shadow:0.8px 1px 0.6px rgba(130,50,120,.45)"></div><div class="a" style="left:42.1px;top:0.6px;width:3.4px;height:2.4px;border-radius:50%;background:#74c070;box-shadow:0.8px 1px 0.6px rgba(130,50,120,.45)"></div><div class="a" style="left:84.6px;top:33.1px;width:3.4px;height:2.4px;border-radius:50%;background:#f4d44a;box-shadow:0.8px 1px 0.6px rgba(130,50,120,.45)"></div><div class="a" style="left:73.4px;top:12.6px;width:3.4px;height:2.4px;border-radius:50%;background:#4a3050;box-shadow:0.8px 1px 0.6px rgba(130,50,120,.45)"></div><div class="a" style="left:90.8px;top:44.1px;width:3.4px;height:2.4px;border-radius:50%;background:#3a78c8;box-shadow:0.8px 1px 0.6px rgba(130,50,120,.45)"></div><div class="a" style="left:79.9px;top:44.8px;width:3.4px;height:2.4px;border-radius:50%;background:#f07a90;box-shadow:0.8px 1px 0.6px rgba(130,50,120,.45)"></div><div class="a" style="left:19.3px;top:34.7px;width:3.4px;height:2.4px;border-radius:50%;background:#3a78c8;box-shadow:0.8px 1px 0.6px rgba(130,50,120,.45)"></div><div class="a" style="left:9.8px;top:3.2px;width:3.4px;height:2.4px;border-radius:50%;background:#f4d44a;box-shadow:0.8px 1px 0.6px rgba(130,50,120,.45)"></div><div class="a" style="left:21.4px;top:32.0px;width:3.4px;height:2.4px;border-radius:50%;background:#f2a236;box-shadow:0.8px 1px 0.6px rgba(130,50,120,.45)"></div><div class="a" style="left:55.2px;top:16.2px;width:3.4px;height:2.4px;border-radius:50%;background:#f4d44a;box-shadow:0.8px 1px 0.6px rgba(130,50,120,.45)"></div><div class="a" style="left:52.5px;top:3.6px;width:3.4px;height:2.4px;border-radius:50%;background:#e8703a;box-shadow:0.8px 1px 0.6px rgba(130,50,120,.45)"></div><div class="a" style="left:62.1px;top:30.4px;width:3.4px;height:2.4px;border-radius:50%;background:#e2434f;box-shadow:0.8px 1px 0.6px rgba(130,50,120,.45)"></div><div class="a" style="left:64.6px;top:3.1px;width:3.4px;height:2.4px;border-radius:50%;background:#3a78c8;box-shadow:0.8px 1px 0.6px rgba(130,50,120,.45)"></div><div class="a" style="left:75.2px;top:33.9px;width:3.4px;height:2.4px;border-radius:50%;background:#f4d44a;box-shadow:0.8px 1px 0.6px rgba(130,50,120,.45)"></div><div class="a" style="left:78.8px;top:44.8px;width:3.4px;height:2.4px;border-radius:50%;background:#f4d44a;box-shadow:0.8px 1px 0.6px rgba(130,50,120,.45)"></div><div class="a" style="left:36.7px;top:47.9px;width:3.4px;height:2.4px;border-radius:50%;background:#f4d44a;box-shadow:0.8px 1px 0.6px rgba(130,50,120,.45)"></div><div class="a" style="left:34.7px;top:42.4px;width:3.4px;height:2.4px;border-radius:50%;background:#e8703a;box-shadow:0.8px 1px 0.6px rgba(130,50,120,.45)"></div><div class="a" style="left:67.5px;top:24.6px;width:3.4px;height:2.4px;border-radius:50%;background:#e8703a;box-shadow:0.8px 1px 0.6px rgba(130,50,120,.45)"></div><div class="a" style="left:57.1px;top:1.2px;width:3.4px;height:2.4px;border-radius:50%;background:#4a3050;box-shadow:0.8px 1px 0.6px rgba(130,50,120,.45)"></div><div class="a" style="left:87.1px;top:37.0px;width:3.4px;height:2.4px;border-radius:50%;background:#74c070;box-shadow:0.8px 1px 0.6px rgba(130,50,120,.45)"></div><div class="a" style="left:44.3px;top:44.7px;width:3.4px;height:2.4px;border-radius:50%;background:#3a78c8;box-shadow:0.8px 1px 0.6px rgba(130,50,120,.45)"></div><div class="a" style="left:19.5px;top:6.7px;width:3.4px;height:2.4px;border-radius:50%;background:#3a78c8;box-shadow:0.8px 1px 0.6px rgba(130,50,120,.45)"></div><div class="a" style="left:60.9px;top:27.9px;width:3.4px;height:2.4px;border-radius:50%;background:#e2434f;box-shadow:0.8px 1px 0.6px rgba(130,50,120,.45)"></div><div class="a" style="left:11.8px;top:4.8px;width:3.4px;height:2.4px;border-radius:50%;background:#2a8f9f;box-shadow:0.8px 1px 0.6px rgba(130,50,120,.45)"></div><div class="a" style="left:79.1px;top:22.6px;width:3.4px;height:2.4px;border-radius:50%;background:#2a8f9f;box-shadow:0.8px 1px 0.6px rgba(130,50,120,.45)"></div><div class="a" style="left:23px;top:5px;width:4.5px;height:3.5px;border-radius:50%;background:#f6f6fa"></div><div class="a" style="left:44px;top:11px;width:3.2px;height:19px;border-radius:45%;background:#f4f4f8;transform:rotate(6deg)"></div><div class="a" style="left:37px;top:31px;width:18px;height:5px;border-radius:50%;background:#f4f4f8"></div><div class="a" style="left:23px;top:36.5px;width:18px;height:5px;border-radius:40% 50% 50% 40%;background:#f2f2f6"></div><div class="a" style="left:27px;top:41px;width:4px;height:2px;border-radius:50%;background:#f2f2f6"></div><div class="a" style="left:28px;top:30px;width:3.5px;height:3px;border-radius:50%;background:#f4f4f8"></div><div class="a" style="left:62px;top:36.5px;width:3.5px;height:3px;border-radius:50%;background:#f4f4f8"></div><div class="a" style="left:57px;top:23.5px;width:40px;height:1.1px;background:#b88c42;transform:rotate(-10deg);transform-origin:0 50%"></div><div class="a" style="left:44.5px;top:21.5px;width:13.5px;height:7.5px;border-radius:50%;background:#c8a050;box-shadow:0 0 0 0.6px #3a2a10"></div><div class="a" style="left:46.5px;top:22.6px;width:3px;height:2.2px;border-radius:50%;background:#f0a030"></div><div class="a" style="left:50px;top:22.4px;width:3px;height:2.2px;border-radius:50%;background:#e8e0c0"></div><div class="a" style="left:53px;top:23.6px;width:3px;height:2.2px;border-radius:50%;background:#74c070"></div><div class="a" style="left:48px;top:25px;width:3px;height:2.2px;border-radius:50%;background:#2a8f9f"></div><div class="a" style="left:51px;top:25.6px;width:3px;height:2.2px;border-radius:50%;background:#e2434f"></div><div class="tt" style="left:31px;top:19.6px;font-size:5.3px;color:#1e1e1e;letter-spacing:-0.2px;-webkit-text-stroke:0.15px #1e1e1e">실험공간계획</div><div class="a" style="left:44px;top:31px;width:3px;height:1px;background:#444;opacity:.7"></div><div class="a" style="left:39px;top:35px;width:18px;height:0.9px;background:#444;opacity:.7"></div><div class="a" style="left:40px;top:38px;width:17px;height:0.9px;background:#444;opacity:.7"></div></div>
<div class="a" style="left:214.80px;top:169.50px;width:0.60px;height:93.30px;background:#525252;"></div><div class="a" style="left:215.40px;top:262.80px;width:66.20px;height:1.00px;background:#4e4e4e;"></div><div class="a" style="left:281.00px;top:169.50px;width:0.60px;height:93.30px;background:#555;"></div>
<div class="a" style="left:215.40px;top:169.50px;width:65.60px;height:93.30px;background:#fff;"></div>
<div class="a" style="left:218.40px;top:172.40px;width:60.30px;height:88.30px;background:transparent;border:0.5px solid #dcdcdc"></div>
<div class="tt" style="left:257.9px;top:213.7px;font-size:6.2px;color:#111;transform:translate(-50%,-50%) rotate(90deg);letter-spacing:-0.2px">5225</div>
<div class="a" style="left:252.60px;top:202.00px;width:0.80px;height:26.00px;background:#555;opacity:.45"></div>
<div class="a" style="left:249.60px;top:207.00px;width:0.80px;height:11.00px;background:#555;opacity:.45"></div>
<div class="a" style="left:220.45px;top:239.00px;width:0.80px;height:13.65px;background:#333;opacity:0.45"></div><div class="a" style="left:222.15px;top:239.00px;width:0.80px;height:17.55px;background:#333;opacity:0.45"></div><div class="a" style="left:223.85px;top:239.00px;width:0.80px;height:19.50px;background:#333;opacity:0.45"></div><div class="a" style="left:225.55px;top:239.00px;width:0.80px;height:15.60px;background:#333;opacity:0.45"></div>
<svg class="a" style="left:298.7px;top:208.4px" width="96" height="53.6" viewBox="0 0 96 53.6">
<rect width="96" height="53.6" fill="#f3f3f1"/>
<text x="47.5" y="23.2" font-family="Liberation Sans" font-size="7" fill="#2a5e32" stroke="#2a5e32" stroke-width="0.1" text-anchor="middle" letter-spacing="1.1">‘5225’</text>
<rect x="36.8" y="25.8" width="19.8" height="1" fill="#4d7d50" opacity=".45"/>
<rect x="41" y="29.8" width="11.4" height="1.1" fill="#2f6a36" opacity=".6"/>
<path d="M0 34 Q3 33 6.5 35 L7.6 53.6 H0 Z" fill="#7a7a78"/>
<path d="M1 38 h4 v2 h-4z M1.5 43 h4 v1.5 h-4z" fill="#4a4a48"/>
<path d="M8.3 24 Q7.4 38 8 53.6" stroke="#8a7448" stroke-width="1.3" fill="none"/>
<g fill="#3f8a2a" stroke="#3f8a2a" stroke-width="0.9" stroke-linejoin="round">
<path d="M8 22 Q2 20 0.5 27 Q4 23 8 23.5Z"/>
<path d="M8.3 22 Q14 18 20 24 Q14 21.5 8.5 23.5Z"/>
<path d="M8 22 Q6 16 2 17 Q6 18 7.6 23Z"/>
<path d="M8.3 22 Q11 15 16 15.5 Q11 17.5 9 23Z"/>
<path d="M8.2 22.5 Q4 26 2.5 32 Q6 26 8.6 23.5Z"/>
<path d="M8.4 22.5 Q14 25 15 31 Q12 26 8.4 23.6Z"/><path d="M8.2 22.5 Q3 24 0.5 30 Q4 25.5 8.3 23.4Z"/><path d="M8.4 22.3 Q16 21 19 28 Q15 23.5 8.5 23.2Z"/>
</g>
<g fill="#8cbf3a" opacity=".9">
<path d="M8.3 22 Q13 19.5 18 23 Q13 21.5 8.5 23Z"/>
<path d="M8 22 Q4 21 2 25 Q5 22.5 8 23Z"/>
</g>
<path d="M4 40 Q10 34 16 40 Q15 50 8 53.6 Q3 50 4 40Z" fill="#5aa862" opacity=".85"/>
<circle cx="11.5" cy="43.5" r="1.8" fill="#d42030"/>
<circle cx="7.5" cy="48" r="2.6" fill="#cf1f2d"/>
<path d="M82 0 H96 V24 Q91 27 87 25 Q82 18 81 8Z" fill="#3c8a34" opacity=".85"/><path d="M86 0 H96 V10 Q90 9 86 0Z" fill="#2a6a2a"/>
<path d="M79 7 Q84 12 87 24 Q81 20 79 7Z" fill="#a8c890"/>
<circle cx="88.6" cy="6.1" r="1.7" fill="#f2a21e"/>
<circle cx="87.4" cy="11.2" r="1.9" fill="#f0961a"/>
<circle cx="91.4" cy="16.6" r="2.7" fill="#e6457a"/>
<circle cx="91.4" cy="16.6" r="1" fill="#ffd0e0"/>
<path d="M84 22 Q87 25 86 27 Q83 26 84 22Z" fill="#1f6a5a"/>
<rect x="66.5" y="50.9" width="28" height="0.9" fill="#3a7a40" opacity=".55"/>
<rect x="88.5" y="48.8" width="5" height="0.9" fill="#3a7a40" opacity=".8"/>
</svg>
<div class="a" style="left:509.00px;top:169.50px;width:0.60px;height:93.80px;background:#525252;"></div><div class="a" style="left:509.60px;top:263.30px;width:67.30px;height:1.00px;background:#4e4e4e;"></div><div class="a" style="left:576.30px;top:169.50px;width:0.60px;height:93.80px;background:#555;"></div>
<div class="a" style="left:509.60px;top:169.50px;width:66.70px;height:93.80px;background:#fff;"></div>
<div class="a" style="left:512.00px;top:172.30px;width:62.00px;height:88.70px;background:transparent;border:0.9px solid #dadada"></div>
<div class="tt" style="left:551.7px;top:217.7px;font-size:4.55px;color:#2a2a2a;white-space:nowrap;transform:translate(-50%,-50%) rotate(90deg);letter-spacing:0px">LA VIE EN ROSE</div>
<div class="a" style="left:545.60px;top:208.00px;width:0.80px;height:10.00px;background:#555;opacity:.45"></div>
<div class="a" style="left:532.70px;top:227.00px;width:0.80px;height:27.00px;background:#555;opacity:.45"></div>
<div class="a" style="left:594.00px;top:190.20px;width:96.00px;height:72.40px;background:#f0eff1;"></div>
<div class="a" style="left:594.00px;top:190.20px;width:96.00px;height:0.50px;background:#777;"></div>
<div class="a" style="left:594.00px;top:190.70px;width:96.00px;height:2.30px;background:#ad94d6;"></div>
<div class="a" style="left:594.00px;top:260.00px;width:96.00px;height:2.60px;background:#a68ccf;"></div>
<div class="a" style="left:594.00px;top:193.00px;width:96.00px;height:0.80px;background:#fbfbfb;"></div>
<div class="tt" style="left:594.00px;width:96.00px;text-align:center;top:214.60px;font-size:6.3px;color:#221a44;font-weight:bold;letter-spacing:-0.05px;-webkit-text-stroke:0.2px #221a44">LA VIE EN ROSE</div>
<div class="a" style="left:628.40px;top:226.90px;width:26.60px;height:1.10px;background:#7a70a0;opacity:.5"></div>
<div class="a" style="left:663.00px;top:242.80px;width:16.60px;height:1.00px;background:#555;opacity:.5"></div>
<div class="a" style="left:671.00px;top:246.40px;width:8.60px;height:1.10px;background:#555;opacity:.5"></div>
<div class="a" style="left:17.70px;top:288.60px;width:0.60px;height:93.40px;background:#525252;"></div><div class="a" style="left:18.30px;top:382.00px;width:66.00px;height:1.00px;background:#4e4e4e;"></div><div class="a" style="left:83.70px;top:288.60px;width:0.60px;height:93.40px;background:#555;"></div>
<div class="a" style="left:18.30px;top:288.60px;width:65.40px;height:93.40px;background:#fff;"></div>
<div class="a" style="left:21.00px;top:291.50px;width:60.00px;height:88.00px;background:transparent;border:0.5px solid #dadada"></div>
<div class="tt" style="left:59.9px;top:333.2px;font-size:5.1px;color:#222;white-space:nowrap;transform:translate(-50%,-50%) rotate(90deg);letter-spacing:-0.2px">HH DESERT COFFE SHOP</div>
<div class="a" style="left:49.70px;top:323.80px;width:1.60px;height:19.40px;background:#333;opacity:.55"></div>
<div class="a" style="left:29.00px;top:343.00px;width:1.20px;height:20.80px;background:#333;opacity:.5"></div>
<div class="a" style="left:32.80px;top:343.00px;width:1.30px;height:20.80px;background:#333;opacity:.5"></div>
<div class="a" style="left:102.40px;top:327.50px;width:95.90px;height:53.50px;background:#0c5ec0;"></div>
<div class="a" style="left:119.90px;top:333.00px;width:62.50px;height:42.30px;background:#2c6fc4;border-radius:3.5px;border:0.6px solid #4a86d0;box-sizing:border-box"></div>
<div class="a" style="left:124.30px;top:335.90px;width:53.70px;height:36.50px;background:#4684ca;"></div>
<div class="a" style="left:142.50px;top:350.40px;width:17.00px;height:0.90px;background:#e8f0fa;opacity:.8"></div>
<div class="a" style="left:144.50px;top:353.60px;width:13.00px;height:0.90px;background:#e8f0fa;opacity:.8"></div>
<div class="a" style="left:116.00px;top:328.00px;width:0.40px;height:53.00px;background:rgba(140,180,230,.25);"></div>
<div class="a" style="left:113.00px;top:340.00px;width:4.00px;height:0.60px;background:#9fc0ea;opacity:.55"></div>
<div class="a" style="left:105.00px;top:342.00px;width:7.00px;height:0.60px;background:#8fb2e0;opacity:.55"></div>
<div class="a" style="left:105.00px;top:344.00px;width:7.00px;height:0.60px;background:#8fb2e0;opacity:.55"></div>
<div class="a" style="left:111.00px;top:360.80px;width:8.00px;height:0.60px;background:#9fc0ea;opacity:.55"></div>
<div class="a" style="left:178.00px;top:354.20px;width:8.00px;height:0.60px;background:#9fc0ea;opacity:.55"></div>
<div class="a" style="left:187.00px;top:354.00px;width:7.00px;height:0.60px;background:#8fb2e0;opacity:.55"></div>
<div class="a" style="left:187.00px;top:356.00px;width:6.00px;height:0.60px;background:#8fb2e0;opacity:.55"></div>
<div class="a" style="left:176.00px;top:378.80px;width:20.00px;height:0.60px;background:#9fc0ea;opacity:.55"></div>
<div class="a" style="left:176.50px;top:377.40px;width:2.00px;height:2.20px;background:transparent;border:0.5px solid #bcd4f0;border-radius:50%"></div>
<div class="a" style="left:313.00px;top:288.60px;width:0.60px;height:93.80px;background:#525252;"></div><div class="a" style="left:313.60px;top:382.40px;width:66.00px;height:1.00px;background:#4e4e4e;"></div><div class="a" style="left:379.00px;top:288.60px;width:0.60px;height:93.80px;background:#555;"></div>
<div class="a" style="left:313.60px;top:288.60px;width:65.40px;height:93.80px;background:#fff;"></div>
<div class="a" style="left:316.60px;top:291.40px;width:60.20px;height:88.60px;background:transparent;border:0.5px solid #dadada"></div>
<div class="tt" style="left:351.9px;top:333.2px;font-size:4.5px;color:#111;white-space:nowrap;transform:translate(-50%,-50%) rotate(90deg);-webkit-text-stroke:0.06px #111">디저트카페</div>
<div class="a" style="left:346.10px;top:326.00px;width:0.80px;height:15.00px;background:#555;opacity:.45"></div>
<div class="a" style="left:318.45px;top:358.00px;width:0.80px;height:15.60px;background:#333;opacity:0.45"></div><div class="a" style="left:320.15px;top:358.00px;width:0.80px;height:19.50px;background:#333;opacity:0.45"></div><div class="a" style="left:321.85px;top:358.00px;width:0.80px;height:17.55px;background:#333;opacity:0.45"></div><div class="a" style="left:323.55px;top:358.00px;width:0.80px;height:13.65px;background:#333;opacity:0.45"></div>
<svg class="a" style="left:397px;top:327.1px" width="96.4" height="54.1" viewBox="0 0 96.4 54.1">
<rect width="96.4" height="54.1" fill="#e6c9c9"/>
<rect x="40" y="0" width="33" height="30" fill="#e6e7ec"/>
<path d="M44 24 L60 26 L60 32 L44 31Z" fill="#a9a6ac"/>
<rect x="0" y="0" width="36" height="54.1" fill="#f2cace"/>
<rect x="0" y="0" width="2.2" height="54.1" fill="#d9d9dc"/>
<rect x="4.5" y="0" width="2.5" height="54.1" fill="#f2e6e8"/>
<rect x="12" y="0" width="2" height="54.1" fill="#f0e0e2"/>
<rect x="25" y="0" width="2" height="54.1" fill="#f0e0e2"/>
<rect x="8" y="30" width="3" height="8" fill="#5a4a50"/>
<rect x="16" y="31" width="6" height="7" fill="#f6f2f2"/>
<rect x="17" y="32" width="4" height="5" fill="#8a8a90"/>
<path d="M0 44 L36 32 L36 34 L0 46Z" fill="#f4f0f0"/>
<path d="M6 54 L36 40 L36 42 L10 54Z" fill="#f0ecec"/>
<rect x="9" y="46" width="2" height="8" fill="#3a3036"/>
<rect x="18" y="43" width="2" height="11" fill="#3a3036"/>
<rect x="27" y="39" width="2" height="15" fill="#3a3036"/>
<path d="M33 30 L47 30 L49 54 L31 54Z" fill="#dcd4d4"/>
<path d="M36 32 L44 32 L46 54 L35 54Z" fill="#a8a0a4" opacity=".5"/>
<circle cx="39" cy="45" r="1.5" fill="#e8e0d8"/><circle cx="43" cy="49" r="1.2" fill="#d8c890"/>
<rect x="40" y="51" width="6" height="3" fill="#6a6a70"/>
<path d="M53 22 L62 16 L62 54 L53 54Z" fill="#dca8a6"/>
<path d="M62 8 L79 4 L79 54 L62 54Z" fill="#e3d2b4"/>
<path d="M62 8 L79 3 L79 6 L62 10Z" fill="#c9a888"/>
<rect x="65" y="14" width="1.6" height="7" fill="#6a5a50"/><rect x="71" y="13" width="1.6" height="7" fill="#6a5a50"/>
<rect x="65" y="27" width="1.6" height="7" fill="#6a5a50"/><rect x="71" y="26" width="1.6" height="7" fill="#6a5a50"/>
<rect x="65" y="40" width="1.6" height="8" fill="#6a5a50"/><rect x="71" y="39" width="1.6" height="8" fill="#6a5a50"/>
<rect x="56" y="28" width="4" height="1" fill="#4a4040"/><rect x="56" y="38" width="4" height="1" fill="#4a4040"/>
<circle cx="74" cy="45" r="1.2" fill="#d03030"/>
<rect x="79" y="0" width="17.4" height="54.1" fill="#f0c2c4"/>
<rect x="79" y="0" width="1.6" height="54.1" fill="#f6e0e0"/>
<rect x="83" y="0" width="13.4" height="8" fill="#e6a8ac"/>
<rect x="85" y="17" width="2" height="13" fill="#3e3438"/><rect x="91.3" y="15" width="2.2" height="14" fill="#3e3438"/>
<rect x="79" y="35" width="17.4" height="2" fill="#f6e6e6"/>
<rect x="85" y="43" width="2" height="11" fill="#3e3438"/><rect x="91.3" y="43" width="2.2" height="11" fill="#3e3438"/>
<rect x="5" y="6.4" width="41" height="21.3" fill="#eca2aa"/>
<text x="10.6" y="12.6" font-family="Liberation Sans" font-size="4" fill="#2a2326" stroke="#2a2326" stroke-width="0.1">디저트리 카페</text>
<text x="24.6" y="16.9" font-family="Liberation Sans" font-size="3" fill="#3a3236" stroke="#3a3236" stroke-width="0.08">디저트 카페</text>
<rect x="6.2" y="24.4" width="10.5" height="1" fill="#6a4a50" opacity=".6"/>
<rect x="27.5" y="23.8" width="16.5" height="0.9" fill="#6a4a50" opacity=".6"/>
<rect x="27.5" y="26" width="16.5" height="0.9" fill="#6a4a50" opacity=".6"/>
</svg>
<div class="dwg" style="left:44.7px;top:90.3px"><svg width="14" height="14" viewBox="0 0 14 14" style="position:absolute;left:0;top:0"><defs><linearGradient id="bl" x1="0" y1="0" x2="1" y2="0.3"><stop offset="0" stop-color="#f6f8fc"/><stop offset="0.4" stop-color="#d6deee"/><stop offset="0.75" stop-color="#7890c4"/><stop offset="1" stop-color="#4a68a8"/></linearGradient><linearGradient id="yl" x1="0" y1="0" x2="0" y2="1"><stop offset="0" stop-color="#fff060"/><stop offset="1" stop-color="#eccb10"/></linearGradient></defs><path d="M0.8 0.5 H10 L13.2 3.7 V13.6 H0.8 Z" fill="url(#bl)" stroke="#3a4a78" stroke-width="0.45"/><path d="M10 0.5 V3.7 H13.2" fill="#9fb2d8" stroke="#3a4a78" stroke-width="0.35"/><path d="M0.8 5.2 L13.2 9.9" stroke="#24408a" stroke-width="1.1"/><path d="M0.8 5.7 L13.2 10.4 V13.6 H0.8 Z" fill="url(#yl)"/><circle cx="3.8" cy="3" r="2" fill="#ffffff"/><circle cx="3.8" cy="3" r="1.15" fill="#22407e"/><path d="M2.4 10.6 V13 H3.2 Q4.4 13 4.4 11.8 Q4.4 10.6 3.2 10.6 Z M5 10.6 L5.7 13 L6.4 11.2 L7.1 13 L7.8 10.6 M10.4 11 Q10 10.5 9.4 10.5 Q8.3 10.5 8.3 11.8 Q8.3 13 9.4 13 Q10.4 13 10.4 12 H9.4" fill="none" stroke="#1a1400" stroke-width="0.75"/></svg></div>
<div class="lb" style="left:-13.5px;top:151.3px">201415102_김민혁_201415117_김우승_</div>
<div class="lb" style="left:-13.5px;top:159.3px">도면집.dwg</div>
<div class="lb" style="left:84.9px;top:151.3px">201415102_김민혁_201415117_김우승_</div>
<div class="lb" style="left:84.9px;top:159.3px">설계설명서.pdf</div>
<div class="lb" style="left:183.3px;top:151.3px">201415117_김우승_201415102_김민혁_</div>
<div class="lb" style="left:183.3px;top:159.3px">도면집.pdf</div>
<div class="dwg" style="left:339.9px;top:90.3px"><svg width="14" height="14" viewBox="0 0 14 14" style="position:absolute;left:0;top:0"><defs><linearGradient id="bl" x1="0" y1="0" x2="1" y2="0.3"><stop offset="0" stop-color="#f6f8fc"/><stop offset="0.4" stop-color="#d6deee"/><stop offset="0.75" stop-color="#7890c4"/><stop offset="1" stop-color="#4a68a8"/></linearGradient><linearGradient id="yl" x1="0" y1="0" x2="0" y2="1"><stop offset="0" stop-color="#fff060"/><stop offset="1" stop-color="#eccb10"/></linearGradient></defs><path d="M0.8 0.5 H10 L13.2 3.7 V13.6 H0.8 Z" fill="url(#bl)" stroke="#3a4a78" stroke-width="0.45"/><path d="M10 0.5 V3.7 H13.2" fill="#9fb2d8" stroke="#3a4a78" stroke-width="0.35"/><path d="M0.8 5.2 L13.2 9.9" stroke="#24408a" stroke-width="1.1"/><path d="M0.8 5.7 L13.2 10.4 V13.6 H0.8 Z" fill="url(#yl)"/><circle cx="3.8" cy="3" r="2" fill="#ffffff"/><circle cx="3.8" cy="3" r="1.15" fill="#22407e"/><path d="M2.4 10.6 V13 H3.2 Q4.4 13 4.4 11.8 Q4.4 10.6 3.2 10.6 Z M5 10.6 L5.7 13 L6.4 11.2 L7.1 13 L7.8 10.6 M10.4 11 Q10 10.5 9.4 10.5 Q8.3 10.5 8.3 11.8 Q8.3 13 9.4 13 Q10.4 13 10.4 12 H9.4" fill="none" stroke="#1a1400" stroke-width="0.75"/></svg></div>
<div class="lb" style="left:281.7px;top:151.3px">201515075_이성준_201715082_김효진_</div>
<div class="lb" style="left:281.7px;top:159.3px">도면집.dwg</div>
<div class="lb" style="left:380.1px;top:151.3px">201515075_이성준_201715082_김효진_</div>
<div class="lb" style="left:380.1px;top:159.3px">도면집.pdf</div>
<div class="lb" style="left:478.5px;top:151.3px">201515075_이성준_201715082_김효진_</div>
<div class="lb" style="left:478.5px;top:159.3px">설계설명서.pdf</div>
<div class="dwg" style="left:635.1px;top:90.3px"><svg width="14" height="14" viewBox="0 0 14 14" style="position:absolute;left:0;top:0"><defs><linearGradient id="bl" x1="0" y1="0" x2="1" y2="0.3"><stop offset="0" stop-color="#f6f8fc"/><stop offset="0.4" stop-color="#d6deee"/><stop offset="0.75" stop-color="#7890c4"/><stop offset="1" stop-color="#4a68a8"/></linearGradient><linearGradient id="yl" x1="0" y1="0" x2="0" y2="1"><stop offset="0" stop-color="#fff060"/><stop offset="1" stop-color="#eccb10"/></linearGradient></defs><path d="M0.8 0.5 H10 L13.2 3.7 V13.6 H0.8 Z" fill="url(#bl)" stroke="#3a4a78" stroke-width="0.45"/><path d="M10 0.5 V3.7 H13.2" fill="#9fb2d8" stroke="#3a4a78" stroke-width="0.35"/><path d="M0.8 5.2 L13.2 9.9" stroke="#24408a" stroke-width="1.1"/><path d="M0.8 5.7 L13.2 10.4 V13.6 H0.8 Z" fill="url(#yl)"/><circle cx="3.8" cy="3" r="2" fill="#ffffff"/><circle cx="3.8" cy="3" r="1.15" fill="#22407e"/><path d="M2.4 10.6 V13 H3.2 Q4.4 13 4.4 11.8 Q4.4 10.6 3.2 10.6 Z M5 10.6 L5.7 13 L6.4 11.2 L7.1 13 L7.8 10.6 M10.4 11 Q10 10.5 9.4 10.5 Q8.3 10.5 8.3 11.8 Q8.3 13 9.4 13 Q10.4 13 10.4 12 H9.4" fill="none" stroke="#1a1400" stroke-width="0.75"/></svg></div>
<div class="lb" style="left:576.9px;top:151.3px">201615101_김명서_201715003_유다경_</div>
<div class="lb" style="left:576.9px;top:159.3px">도면집.dwg</div>
<div class="lb" style="left:675.3px;top:151.3px">201615101_김명서_201715003_유다경_</div>
<div class="lb" style="left:675.3px;top:159.3px">도면집.pdf</div>
<div class="lb" style="left:-13.5px;top:269.8px">201615101_김명서_201715003_유다경_</div>
<div class="lb" style="left:-13.5px;top:277.8px">설계설명서.pdf</div>
<div class="dwg" style="left:143.1px;top:209.1px"><svg width="14" height="14" viewBox="0 0 14 14" style="position:absolute;left:0;top:0"><defs><linearGradient id="bl" x1="0" y1="0" x2="1" y2="0.3"><stop offset="0" stop-color="#f6f8fc"/><stop offset="0.4" stop-color="#d6deee"/><stop offset="0.75" stop-color="#7890c4"/><stop offset="1" stop-color="#4a68a8"/></linearGradient><linearGradient id="yl" x1="0" y1="0" x2="0" y2="1"><stop offset="0" stop-color="#fff060"/><stop offset="1" stop-color="#eccb10"/></linearGradient></defs><path d="M0.8 0.5 H10 L13.2 3.7 V13.6 H0.8 Z" fill="url(#bl)" stroke="#3a4a78" stroke-width="0.45"/><path d="M10 0.5 V3.7 H13.2" fill="#9fb2d8" stroke="#3a4a78" stroke-width="0.35"/><path d="M0.8 5.2 L13.2 9.9" stroke="#24408a" stroke-width="1.1"/><path d="M0.8 5.7 L13.2 10.4 V13.6 H0.8 Z" fill="url(#yl)"/><circle cx="3.8" cy="3" r="2" fill="#ffffff"/><circle cx="3.8" cy="3" r="1.15" fill="#22407e"/><path d="M2.4 10.6 V13 H3.2 Q4.4 13 4.4 11.8 Q4.4 10.6 3.2 10.6 Z M5 10.6 L5.7 13 L6.4 11.2 L7.1 13 L7.8 10.6 M10.4 11 Q10 10.5 9.4 10.5 Q8.3 10.5 8.3 11.8 Q8.3 13 9.4 13 Q10.4 13 10.4 12 H9.4" fill="none" stroke="#1a1400" stroke-width="0.75"/></svg></div>
<div class="lb" style="left:84.9px;top:269.8px">201715007_김미희_201715091_이채림_</div>
<div class="lb" style="left:84.9px;top:277.8px">도면집.dwg</div>
<div class="lb" style="left:183.3px;top:269.8px">201715007_김미희_201715091_이채림_</div>
<div class="lb" style="left:183.3px;top:277.8px">도면집.pdf</div>
<div class="lb" style="left:281.7px;top:269.8px">201715007_김미희_201715091_이채림_</div>
<div class="lb" style="left:281.7px;top:277.8px">설계설명서.pdf</div>
<div class="dwg" style="left:438.3px;top:209.1px"><svg width="14" height="14" viewBox="0 0 14 14" style="position:absolute;left:0;top:0"><defs><linearGradient id="bl" x1="0" y1="0" x2="1" y2="0.3"><stop offset="0" stop-color="#f6f8fc"/><stop offset="0.4" stop-color="#d6deee"/><stop offset="0.75" stop-color="#7890c4"/><stop offset="1" stop-color="#4a68a8"/></linearGradient><linearGradient id="yl" x1="0" y1="0" x2="0" y2="1"><stop offset="0" stop-color="#fff060"/><stop offset="1" stop-color="#eccb10"/></linearGradient></defs><path d="M0.8 0.5 H10 L13.2 3.7 V13.6 H0.8 Z" fill="url(#bl)" stroke="#3a4a78" stroke-width="0.45"/><path d="M10 0.5 V3.7 H13.2" fill="#9fb2d8" stroke="#3a4a78" stroke-width="0.35"/><path d="M0.8 5.2 L13.2 9.9" stroke="#24408a" stroke-width="1.1"/><path d="M0.8 5.7 L13.2 10.4 V13.6 H0.8 Z" fill="url(#yl)"/><circle cx="3.8" cy="3" r="2" fill="#ffffff"/><circle cx="3.8" cy="3" r="1.15" fill="#22407e"/><path d="M2.4 10.6 V13 H3.2 Q4.4 13 4.4 11.8 Q4.4 10.6 3.2 10.6 Z M5 10.6 L5.7 13 L6.4 11.2 L7.1 13 L7.8 10.6 M10.4 11 Q10 10.5 9.4 10.5 Q8.3 10.5 8.3 11.8 Q8.3 13 9.4 13 Q10.4 13 10.4 12 H9.4" fill="none" stroke="#1a1400" stroke-width="0.75"/></svg></div>
<div class="lb" style="left:380.1px;top:269.8px">201715015_한대호_도면집.dwg</div>
<div class="lb" style="left:478.5px;top:269.8px">201715015_한대호_도면집.pdf</div>
<div class="lb" style="left:576.9px;top:269.8px">201715015_한대호_설계설명서.pdf</div>
<div class="dwg" style="left:733.5px;top:209.1px"><svg width="14" height="14" viewBox="0 0 14 14" style="position:absolute;left:0;top:0"><defs><linearGradient id="bl" x1="0" y1="0" x2="1" y2="0.3"><stop offset="0" stop-color="#f6f8fc"/><stop offset="0.4" stop-color="#d6deee"/><stop offset="0.75" stop-color="#7890c4"/><stop offset="1" stop-color="#4a68a8"/></linearGradient><linearGradient id="yl" x1="0" y1="0" x2="0" y2="1"><stop offset="0" stop-color="#fff060"/><stop offset="1" stop-color="#eccb10"/></linearGradient></defs><path d="M0.8 0.5 H10 L13.2 3.7 V13.6 H0.8 Z" fill="url(#bl)" stroke="#3a4a78" stroke-width="0.45"/><path d="M10 0.5 V3.7 H13.2" fill="#9fb2d8" stroke="#3a4a78" stroke-width="0.35"/><path d="M0.8 5.2 L13.2 9.9" stroke="#24408a" stroke-width="1.1"/><path d="M0.8 5.7 L13.2 10.4 V13.6 H0.8 Z" fill="url(#yl)"/><circle cx="3.8" cy="3" r="2" fill="#ffffff"/><circle cx="3.8" cy="3" r="1.15" fill="#22407e"/><path d="M2.4 10.6 V13 H3.2 Q4.4 13 4.4 11.8 Q4.4 10.6 3.2 10.6 Z M5 10.6 L5.7 13 L6.4 11.2 L7.1 13 L7.8 10.6 M10.4 11 Q10 10.5 9.4 10.5 Q8.3 10.5 8.3 11.8 Q8.3 13 9.4 13 Q10.4 13 10.4 12 H9.4" fill="none" stroke="#1a1400" stroke-width="0.75"/></svg></div>
<div class="lb" style="left:675.3px;top:269.8px">201715017_남우혁_201715031_박정효_</div>
<div class="lb" style="left:675.3px;top:277.8px">도면집.dwg</div>
<div class="lb" style="left:-13.5px;top:388.9px">201715017_남우혁_201715031_박정효_</div>
<div class="lb" style="left:-13.5px;top:396.9px">도면집.pdf</div>
<div class="lb" style="left:84.9px;top:388.9px">201715017_남우혁_201715031_박정효_</div>
<div class="lb" style="left:84.9px;top:396.9px">설계설명서.pdf</div>
<div class="dwg" style="left:241.5px;top:327.8px"><svg width="14" height="14" viewBox="0 0 14 14" style="position:absolute;left:0;top:0"><defs><linearGradient id="bl" x1="0" y1="0" x2="1" y2="0.3"><stop offset="0" stop-color="#f6f8fc"/><stop offset="0.4" stop-color="#d6deee"/><stop offset="0.75" stop-color="#7890c4"/><stop offset="1" stop-color="#4a68a8"/></linearGradient><linearGradient id="yl" x1="0" y1="0" x2="0" y2="1"><stop offset="0" stop-color="#fff060"/><stop offset="1" stop-color="#eccb10"/></linearGradient></defs><path d="M0.8 0.5 H10 L13.2 3.7 V13.6 H0.8 Z" fill="url(#bl)" stroke="#3a4a78" stroke-width="0.45"/><path d="M10 0.5 V3.7 H13.2" fill="#9fb2d8" stroke="#3a4a78" stroke-width="0.35"/><path d="M0.8 5.2 L13.2 9.9" stroke="#24408a" stroke-width="1.1"/><path d="M0.8 5.7 L13.2 10.4 V13.6 H0.8 Z" fill="url(#yl)"/><circle cx="3.8" cy="3" r="2" fill="#ffffff"/><circle cx="3.8" cy="3" r="1.15" fill="#22407e"/><path d="M2.4 10.6 V13 H3.2 Q4.4 13 4.4 11.8 Q4.4 10.6 3.2 10.6 Z M5 10.6 L5.7 13 L6.4 11.2 L7.1 13 L7.8 10.6 M10.4 11 Q10 10.5 9.4 10.5 Q8.3 10.5 8.3 11.8 Q8.3 13 9.4 13 Q10.4 13 10.4 12 H9.4" fill="none" stroke="#1a1400" stroke-width="0.75"/></svg></div>
<div class="lb" style="left:183.3px;top:388.9px">201715092_조경찬_201715084_임성흠_</div>
<div class="lb" style="left:183.3px;top:396.9px">도면집.dwg</div>
<div class="lb" style="left:281.7px;top:388.9px">201715092_조경찬_201715084_임성흠_</div>
<div class="lb" style="left:281.7px;top:396.9px">도면집.pdf</div>
<div class="lb" style="left:380.1px;top:388.9px">201715092_조경찬_201715084_임성흠_</div>
<div class="lb" style="left:380.1px;top:396.9px">설계설명서.pdf</div>

<!-- scrollbar -->
<div class="a" style="left:790.5px;top:50px;width:6.5px;height:372.3px;background:linear-gradient(90deg,#5a5a5a 0,#5a5a5a 12%,#666 14%,#6c6c6c 40%,#6c6c6c 80%,#636363 100%)"></div>
<div class="a" style="left:790.5px;top:422.3px;width:6.5px;height:6.1px;background:#545454"></div>
<div class="a" style="left:797px;top:42px;width:1.5px;height:388px;background:#3e3e3e"></div>
<div class="a" style="left:798.5px;top:41px;width:1.5px;height:389px;background:#5a5a5a"></div>

<!-- bottom strips -->
<div class="a" style="left:3px;top:422px;width:787.5px;height:0.6px;background:#555"></div>
<div class="a" style="left:3px;top:422.6px;width:787.5px;height:5.8px;background:#646464"></div>
<div class="a" style="left:3px;top:426px;width:787.5px;height:0.5px;background:#5a5a5a"></div>
<div class="a" style="left:0;top:428.4px;width:800px;height:1.4px;background:#7a7a7a"></div>
<div class="a" style="left:0;top:429.8px;width:800px;height:8.2px;background:#555"></div>
<div class="a" style="left:11.2px;top:431px;font-size:5.5px;color:#e4e4e4;line-height:6px">21 items</div>

<!-- status bar right -->
<div class="a" style="left:610.6px;top:433px;width:4px;height:3px;border:0.6px solid #999;border-radius:0.5px"></div>
<div class="a" style="left:618px;top:433.3px;width:108px;height:1.9px;background:linear-gradient(#d0d0d0,#a0a0a0);border-radius:1px"></div>
<div class="a" style="left:652px;top:431.5px;width:3px;height:4.5px;background:#2fbf3f;border-radius:1px 1px 0.5px 0.5px;box-shadow:inset 0 1px 0 #c8f0c8"></div>
<div class="a" style="left:728.5px;top:432.5px;width:5.5px;height:3.8px;border:0.7px solid #aaa;border-radius:0.6px"></div>
<div class="a" style="left:740.5px;top:430px;width:1px;height:8px;background:#474747"></div>
<div class="a" style="left:741.5px;top:430px;width:0.5px;height:8px;background:#666"></div>
<div class="a" style="left:745px;top:431.6px;width:7.5px;height:5px;border:0.6px solid #999;border-radius:1px;background:repeating-linear-gradient(90deg,transparent 0 1.9px,#999 1.9px 2.5px)"></div>
<div class="a" style="left:757px;top:430px;width:1px;height:8px;background:#474747"></div>
<div class="a" style="left:758.5px;top:430.3px;width:11.5px;height:6.7px;background:#6a6c72;border:0.6px solid #7a88a8"></div>
<div class="a" style="left:760.6px;top:431.6px;width:1.9px;height:1.8px;background:#f2b400;box-shadow:3.1px 0 #f2b400,5.7px 0 #f2b400,0 2.8px #f2b400,3.1px 2.8px #f2b400,5.7px 2.8px #f2b400"></div>
<div class="a" style="left:771px;top:432.9px;width:4.8px;height:2.4px;background:#eee"></div>
<div class="a" style="left:777px;top:433.5px;width:3px;height:2.5px;border-left:0.5px solid #888;border-bottom:0.5px solid #888"></div>
<div class="a" style="left:783px;top:433px;width:1.3px;height:2.5px;background:#999"></div>
<div class="a" style="left:784.5px;top:434px;width:6.5px;height:1.2px;background:#888"></div>
</body></html>
